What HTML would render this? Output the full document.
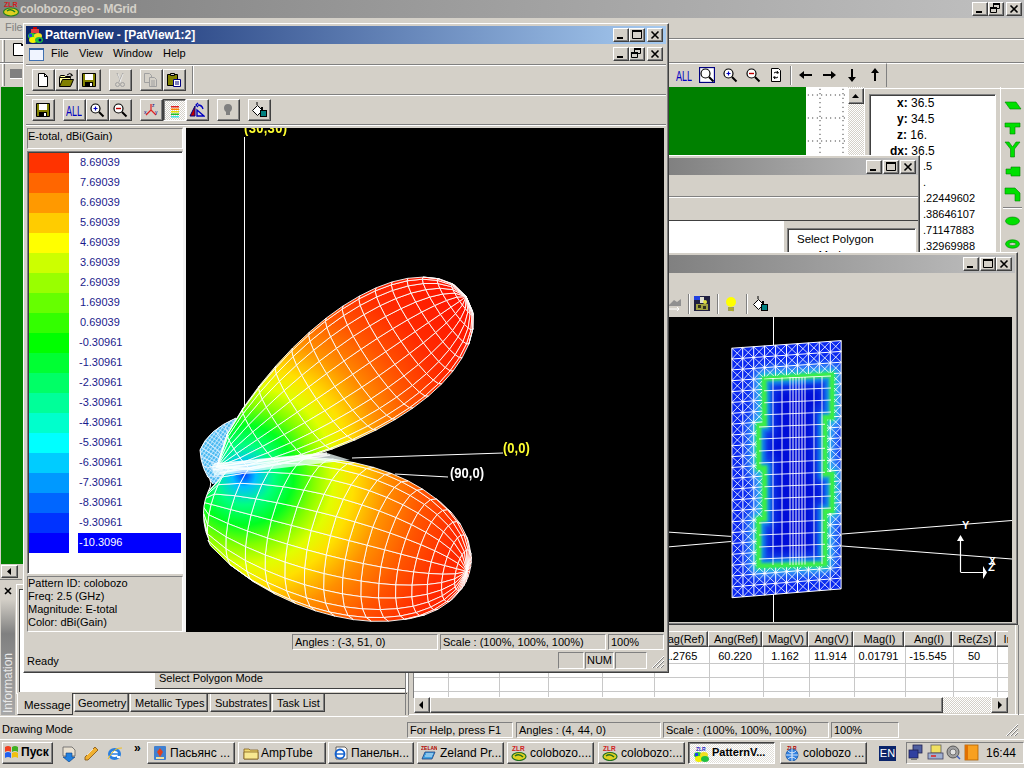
<!DOCTYPE html>
<html><head><meta charset="utf-8">
<style>
*{margin:0;padding:0;box-sizing:border-box}
html,body{width:1024px;height:768px;overflow:hidden;background:#D4D0C8;font-family:"Liberation Sans",sans-serif;font-size:11px;color:#000;position:relative}
.a{position:absolute}
.raised{border-top:1px solid #fff;border-left:1px solid #fff;border-right:1px solid #404040;border-bottom:1px solid #404040;box-shadow:inset -1px -1px 0 #808080;background:#D4D0C8}
.sunk{border-top:1px solid #808080;border-left:1px solid #808080;border-right:1px solid #fff;border-bottom:1px solid #fff}
.sunk2{border-top:1px solid #808080;border-left:1px solid #808080;border-right:1px solid #fff;border-bottom:1px solid #fff;box-shadow:inset 1px 1px 0 #404040}
.stat{position:absolute;border-top:1px solid #808080;border-left:1px solid #808080;border-right:1px solid #fff;border-bottom:1px solid #fff;padding-left:2px;line-height:14px;white-space:nowrap;overflow:hidden;font-size:11px}
.tb{position:absolute;width:16px;height:14px;background:#D4D0C8;border-top:1px solid #fff;border-left:1px solid #fff;border-right:1px solid #404040;border-bottom:1px solid #404040;box-shadow:inset -1px -1px 0 #808080}
.t{position:absolute;white-space:nowrap}
.hl{position:absolute;height:1px}
.vl{position:absolute;width:1px}
.btn{position:absolute;background:#D4D0C8;border-top:1px solid #fff;border-left:1px solid #fff;border-right:1px solid #404040;border-bottom:1px solid #404040;box-shadow:inset -1px -1px 0 #808080}
.tk{position:absolute;top:742px;height:22px;background:#D4D0C8;border-top:1px solid #fff;border-left:1px solid #fff;border-right:1px solid #404040;border-bottom:1px solid #404040;box-shadow:inset -1px -1px 0 #808080;font-size:11px;line-height:19px;padding-left:22px;white-space:nowrap;overflow:hidden}
</style></head><body>

<!-- ===== MAIN WINDOW (background) ===== -->
<div class="a" style="left:0;top:0;width:1024px;height:18px;background:linear-gradient(to right,#808080,#C0C0C0)"></div>
<div class="t" style="left:20px;top:2px;font-weight:bold;font-size:12px;color:#D4D0C8;letter-spacing:-0.3px">colobozo.geo - MGrid</div>
<svg class="a" width="18" height="18" style="left:2px;top:0px"><text x="2" y="7" font-family="Liberation Sans" font-weight="bold" font-size="7" fill="#D02020">ZLR</text><ellipse cx="9" cy="12" rx="7.5" ry="4" fill="#E0D020" stroke="#208020" stroke-width="1.2"/><path d="M5 11q4-3 8 1" stroke="#208020" stroke-width="1.5" fill="none"/></svg>
<div class="tb" style="left:972px;top:2px"><svg width="16" height="14" style="position:absolute;left:-1px;top:-1px"><rect x="4" y="9" width="6" height="2" fill="#000"/></svg></div>
<div class="tb" style="left:988px;top:2px"><svg width="16" height="14" style="position:absolute;left:-1px;top:-1px"><path d="M5.5 1.5h6v5h-6z" fill="none" stroke="#000"/><rect x="5" y="1" width="7" height="2" fill="#000"/><path d="M2.5 5.5h6v5h-6z" fill="#D4D0C8" stroke="#000"/><rect x="2" y="5" width="7" height="2" fill="#000"/></svg></div>
<div class="tb" style="left:1006px;top:2px"><svg width="16" height="14" style="position:absolute;left:-1px;top:-1px"><path d="M4.5 3.5L11.5 10.5M11.5 3.5L4.5 10.5" stroke="#000" stroke-width="1.6"/></svg></div>
<div class="t" style="left:5px;top:21px;font-size:11px;color:#808080">File</div>
<div class="hl" style="left:0;top:38px;width:1024px;background:#808080"></div>
<div class="hl" style="left:0;top:39px;width:1024px;background:#fff"></div>
<div class="hl" style="left:0;top:62px;width:1024px;background:#808080"></div>
<div class="hl" style="left:0;top:63px;width:1024px;background:#fff"></div>


<div class="vl" style="left:2px;top:40px;height:22px;background:#fff"></div><div class="vl" style="left:4px;top:40px;height:22px;background:#808080"></div>
<div class="vl" style="left:2px;top:64px;height:22px;background:#fff"></div><div class="vl" style="left:4px;top:64px;height:22px;background:#808080"></div>
<svg class="a" width="12" height="14" style="left:12px;top:43px"><path d="M1.5 0.5h8l2 2v10h-10z" fill="#fff" stroke="#000"/><path d="M9.5 0.5v2h2" fill="none" stroke="#000"/></svg>
<div class="a" style="left:10px;top:69px;width:12px;height:10px;background:#808080;border-bottom:1px solid #fff"></div>
<!-- main toolbar right -->
<div class="a" style="left:668px;top:63px;width:219px;height:24px;border-left:1px solid #fff;border-top:1px solid #fff;border-right:1px solid #808080"></div>
<div class="vl" style="left:790px;top:66px;height:19px;background:#808080"></div><div class="vl" style="left:791px;top:66px;height:19px;background:#fff"></div>
<svg class="a" width="16" height="16" style="left:676px;top:67px"><text x="0" y="13" font-family="Liberation Sans" font-size="13" fill="#0000C0" textLength="16" lengthAdjust="spacingAndGlyphs" transform="scale(1,1.1)">ALL</text></svg>
<svg class="a" width="16" height="16" style="left:699px;top:67px"><rect x="0.5" y="0.5" width="15" height="15" fill="#fff" stroke="#000080" stroke-width="1.3"/><circle cx="6.5" cy="6.5" r="4.5" fill="#fff" stroke="#000" stroke-width="1.2"/><path d="M10 10l4.5 4.5" stroke="#000" stroke-width="2"/></svg>
<svg class="a" width="16" height="16" style="left:722px;top:67px"><circle cx="6.5" cy="6.5" r="4.5" fill="#fff" stroke="#000" stroke-width="1.2"/><path d="M10 10l4.5 4.5" stroke="#000" stroke-width="2"/><path d="M4.5 6.5h4M6.5 4.5v4" stroke="#0000C0" stroke-width="1.2"/></svg>
<svg class="a" width="16" height="16" style="left:745px;top:67px"><circle cx="6.5" cy="6.5" r="4.5" fill="#fff" stroke="#000" stroke-width="1.2"/><path d="M10 10l4.5 4.5" stroke="#000" stroke-width="2"/><path d="M4 6.5h5" stroke="#C00000" stroke-width="1.4"/></svg>
<svg class="a" width="16" height="16" style="left:768px;top:67px"><path d="M3.5 1.5h7l2 2v11h-9z" fill="#fff" stroke="#000"/><path d="M6 6q2-2 4 0M10 10q-2 2-4 0" stroke="#000" fill="none"/><path d="M9 4l1.5 2h-2M7 12l-1.5-2h2" stroke="#000" fill="none"/></svg>
<svg class="a" width="16" height="16" style="left:798px;top:67px"><path d="M1 8l5-4v3h8v2H6v3z" fill="#000"/></svg>
<svg class="a" width="16" height="16" style="left:821px;top:67px"><path d="M15 8l-5-4v3H2v2h8v3z" fill="#000"/></svg>
<svg class="a" width="16" height="16" style="left:844px;top:67px"><path d="M8 15l-4-5h3V2h2v8h3z" fill="#000"/></svg>
<svg class="a" width="16" height="16" style="left:867px;top:67px"><path d="M8 1l-4 5h3v8h2V6h3z" fill="#000"/></svg>
<!-- green drawing area -->
<div class="a" style="left:1px;top:87px;width:806px;height:477px;background:#008000"></div>
<div class="a" style="left:806px;top:87px;width:42px;height:68px;background:#fff"></div>
<div class="a" style="left:848px;top:87px;width:16px;height:68px;background:#E8E6E2"></div>


<!-- right property panel -->
<div class="a" style="left:806px;top:87px;width:42px;height:68px;background-color:#fff;background-image:radial-gradient(circle,#000 0.6px,transparent 0.7px);background-size:4.5px 23px;background-position:0px -3.5px"></div>
<div class="a" style="left:806px;top:87px;width:42px;height:68px;background-image:radial-gradient(circle,#000 0.6px,transparent 0.7px);background-size:23px 4.5px;background-position:2.5px 0px"></div>
<div class="a" style="left:848px;top:87px;width:16px;height:68px;background:repeating-conic-gradient(#fff 0 25%,#D4D0C8 0 50%) 0 0/2px 2px"></div>
<div class="a raised" style="left:848px;top:88px;width:16px;height:16px"></div>
<svg class="a" width="16" height="16" style="left:848px;top:88px"><path d="M4 10h7l-3.5-4z" fill="#000"/></svg>
<div class="a" style="left:864px;top:88px;width:136px;height:170px;border-top:1px solid #fff;border-left:1px solid #fff"></div>
<div class="a sunk2" style="left:869px;top:94px;width:127px;height:164px;background:#fff"></div>
<div class="t" style="left:897px;top:96px;font-size:12px"><b>x:</b> 36.5</div>
<div class="t" style="left:897px;top:112px;font-size:12px"><b>y:</b> 34.5</div>
<div class="t" style="left:897px;top:128px;font-size:12px"><b>z:</b> 16.</div>
<div class="t" style="left:890px;top:144px;font-size:12px"><b>dx:</b> 36.5</div>
<div class="t" style="left:923px;top:160px;font-size:11px">.5</div>
<div class="t" style="left:923px;top:176px;font-size:11px">.</div>
<div class="t" style="left:923px;top:192px;font-size:11px">.22449602</div>
<div class="t" style="left:923px;top:208px;font-size:11px">.38646107</div>
<div class="t" style="left:923px;top:224px;font-size:11px">.71147883</div>
<div class="t" style="left:923px;top:240px;font-size:11px">.32969988</div>
<!-- right green toolbar -->
<div class="vl" style="left:1000px;top:87px;height:170px;background:#fff"></div>
<div class="hl" style="left:1001px;top:88px;width:23px;background:#fff"></div>
<svg class="a" width="24" height="170" style="left:1000px;top:87px">
<g fill="#00E000" stroke="#008000" stroke-width="0.6">
<path d="M5 15h11l5 7H10z"/>
<path d="M5 36h15v4h-5v7h-5v-7H5z"/>
<path d="M5 55h4l3.5 5 3.5-5h4l-5.5 7v8h-4v-8z"/>
<path d="M6 82h5v-2h9v9h-9v-2H6z"/>
<path d="M5 101h10l5 5v8h-5v-7H5z"/>
<ellipse cx="12.5" cy="134" rx="7" ry="4"/>
<path d="M5.5 157a7 4.2 0 1 0 14 0a7 4.2 0 1 0-14 0zM9 157a3.5 1.5 0 1 0 7 0a3.5 1.5 0 1 0-7 0z" fill-rule="evenodd"/>
</g>
<path d="M3 120.5h19" stroke="#808080"/><path d="M3 121.5h19" stroke="#fff"/>
</svg>
<!-- window 2 (inactive) -->
<div class="a raised" style="left:666px;top:155px;width:254px;height:100px"></div>
<div class="a" style="left:668px;top:158px;width:250px;height:17px;background:linear-gradient(to right,#808080,#C0C0C0)"></div>
<div class="tb" style="left:866px;top:160px"><svg width="16" height="14" style="position:absolute;left:-1px;top:-1px"><rect x="4" y="9" width="6" height="2" fill="#000"/></svg></div>
<div class="tb" style="left:883px;top:160px"><svg width="16" height="14" style="position:absolute;left:-1px;top:-1px"><path d="M3.5 2.5h9v8h-9z" fill="none" stroke="#000"/><rect x="3" y="2" width="10" height="2" fill="#000"/></svg></div>
<div class="tb" style="left:900px;top:160px"><svg width="16" height="14" style="position:absolute;left:-1px;top:-1px"><path d="M4.5 3.5L11.5 10.5M11.5 3.5L4.5 10.5" stroke="#000" stroke-width="1.6"/></svg></div>
<div class="hl" style="left:668px;top:196px;width:250px;background:#808080"></div>
<div class="hl" style="left:668px;top:197px;width:250px;background:#fff"></div>
<div class="hl" style="left:668px;top:220px;width:250px;background:#404040"></div>
<div class="a" style="left:668px;top:221px;width:116px;height:34px;background:#fff"></div>
<div class="a sunk2" style="left:787px;top:228px;width:129px;height:30px;background:#fff"></div>
<div class="t" style="left:797px;top:231px;font-size:11.5px;line-height:16px;text-align:center;width:72px">Select Polygon<br>Mode</div>

<!-- window 3 (inactive, 3D geometry) -->
<div class="a raised" style="left:664px;top:252px;width:354px;height:373px"></div>
<div class="a" style="left:667px;top:255px;width:348px;height:18px;background:linear-gradient(to right,#808080,#C0C0C0)"></div>
<div class="tb" style="left:963px;top:257px"><svg width="16" height="14" style="position:absolute;left:-1px;top:-1px"><rect x="4" y="9" width="6" height="2" fill="#000"/></svg></div>
<div class="tb" style="left:980px;top:257px"><svg width="16" height="14" style="position:absolute;left:-1px;top:-1px"><path d="M3.5 2.5h9v8h-9z" fill="none" stroke="#000"/><rect x="3" y="2" width="10" height="2" fill="#000"/></svg></div>
<div class="tb" style="left:996px;top:257px"><svg width="16" height="14" style="position:absolute;left:-1px;top:-1px"><path d="M4.5 3.5L11.5 10.5M11.5 3.5L4.5 10.5" stroke="#000" stroke-width="1.6"/></svg></div>
<div class="vl" style="left:667px;top:273px;height:350px;background:#404040"></div>
<svg class="a" width="16" height="16" style="left:668px;top:296px"><path d="M1 9l5-5 3 2 4-3v7H1z" fill="#909090"/><path d="M1 13h10M9 11l2 2-2 2" stroke="#fff" fill="none"/></svg>
<div class="vl" style="left:688px;top:294px;height:20px;background:#808080"></div><div class="vl" style="left:689px;top:294px;height:20px;background:#fff"></div>
<svg class="a" width="16" height="16" style="left:694px;top:296px"><rect x="0" y="0" width="16" height="15" fill="#202040"/><rect x="0" y="0" width="6" height="4" fill="#2040E0"/><path d="M6 1h4v6H6z" fill="#E0E0D0"/><path d="M2 8h12v6H2z" fill="#A0A040"/><circle cx="11" cy="6" r="2" fill="#E0E040"/><path d="M4 9h3v3H4zM9 10h3v3H9z" fill="#303020"/></svg>
<div class="vl" style="left:717px;top:294px;height:20px;background:#808080"></div><div class="vl" style="left:718px;top:294px;height:20px;background:#fff"></div>
<svg class="a" width="16" height="16" style="left:723px;top:296px"><circle cx="8" cy="6" r="5" fill="#FFFF00"/><path d="M5 12h6M5 14h6" stroke="#606000" stroke-width="1.2"/><path d="M5.5 11.5l5 1.5M5.5 13.5l5 1.5" stroke="#C0C000" stroke-width="0.8"/></svg>
<div class="vl" style="left:746px;top:294px;height:20px;background:#808080"></div><div class="vl" style="left:747px;top:294px;height:20px;background:#fff"></div>
<svg class="a" width="16" height="16" style="left:752px;top:296px"><path d="M1.5 8.5l5-5 5 5-5 5z" fill="#fff" stroke="#000"/><path d="M6 3V0" stroke="#000"/><rect x="9.5" y="8.5" width="6" height="6" fill="#008080" stroke="#000"/><path d="M11 5v3" stroke="#000" stroke-width="2"/></svg>
<div class="a" style="left:668px;top:317px;width:344px;height:305px;background:#000;overflow:hidden"><svg width="344" height="305" style="position:absolute;left:0;top:0"><defs>
<filter id="bl" x="-50%" y="-50%" width="200%" height="200%"><feGaussianBlur stdDeviation="5"/></filter>
<filter id="bl2" x="-50%" y="-50%" width="200%" height="200%"><feGaussianBlur stdDeviation="2"/></filter>
<filter id="bl3" x="-50%" y="-50%" width="200%" height="200%"><feGaussianBlur stdDeviation="0.8"/></filter>
<clipPath id="ic"><polygon points="96.0,61.6 164.0,57.7 164.0,100.6 157.0,100.6 157.0,157.0 164.0,157.0 164.0,194.0 157.0,194.0 157.0,247.0 90.6,249.0 90.6,202.0 96.4,202.0 96.4,151.0 90.6,151.0 90.6,108.0 96.4,108.0"/></clipPath><clipPath id="oc"><polygon points="63.8,31.2 173.2,23.6 173.1,271.9 64.1,280.7"/></clipPath>
<mask id="om"><rect width="345" height="305" fill="#fff"/><polygon points="96.0,61.6 164.0,57.7 164.0,100.6 157.0,100.6 157.0,157.0 164.0,157.0 164.0,194.0 157.0,194.0 157.0,247.0 90.6,249.0 90.6,202.0 96.4,202.0 96.4,151.0 90.6,151.0 90.6,108.0 96.4,108.0" fill="#000" stroke="#000" stroke-width="4"/></mask></defs><line x1="105.5" y1="0" x2="105.5" y2="305" stroke="#fff"/><polyline points="-1.0,215.0 63.0,219.4" stroke="#fff" fill="none"/><polyline points="-1.0,230.0 63.0,224.5" stroke="#fff" fill="none"/><polyline points="174.0,217.0 344.0,203.5" stroke="#fff" fill="none"/><polyline points="174.0,229.0 344.0,242.0" stroke="#fff" fill="none"/><polygon points="63.8,31.2 173.2,23.6 173.1,271.9 64.1,280.7" fill="#0A28F0"/><polygon points="96.0,61.6 164.0,57.7 164.0,100.6 157.0,100.6 157.0,157.0 164.0,157.0 164.0,194.0 157.0,194.0 157.0,247.0 90.6,249.0 90.6,202.0 96.4,202.0 96.4,151.0 90.6,151.0 90.6,108.0 96.4,108.0" fill="none" stroke="#50D0FF" stroke-width="22" stroke-linejoin="round" opacity="0.75" filter="url(#bl)" clip-path="url(#oc)"/><polygon points="96.0,61.6 164.0,57.7 164.0,100.6 157.0,100.6 157.0,157.0 164.0,157.0 164.0,194.0 157.0,194.0 157.0,247.0 90.6,249.0 90.6,202.0 96.4,202.0 96.4,151.0 90.6,151.0 90.6,108.0 96.4,108.0" fill="#0010D8" stroke="#10D8B0" stroke-width="8" filter="url(#bl2)"/><polygon points="96.0,61.6 164.0,57.7 164.0,100.6 157.0,100.6 157.0,157.0 164.0,157.0 164.0,194.0 157.0,194.0 157.0,247.0 90.6,249.0 90.6,202.0 96.4,202.0 96.4,151.0 90.6,151.0 90.6,108.0 96.4,108.0" fill="none" stroke="#2080FF" stroke-width="22" opacity="0.5" filter="url(#bl)" clip-path="url(#ic)"/><polygon points="96.0,61.6 164.0,57.7 164.0,100.6 157.0,100.6 157.0,157.0 164.0,157.0 164.0,194.0 157.0,194.0 157.0,247.0 90.6,249.0 90.6,202.0 96.4,202.0 96.4,151.0 90.6,151.0 90.6,108.0 96.4,108.0" fill="none" stroke="#40F040" stroke-width="5" opacity="0.95" filter="url(#bl3)"/><path d="M63.8,31.2L64.1,280.7M74.7,30.4L75.0,279.8M85.7,29.7L85.9,278.9M96.6,28.9L96.8,278.1M107.6,28.2L107.7,277.2M118.5,27.4L118.6,276.3M129.4,26.6L129.5,275.4M140.4,25.9L140.4,274.5M151.3,25.1L151.3,273.7M162.3,24.4L162.2,272.8M173.2,23.6L173.1,271.9M63.8,31.2L173.2,23.6M63.8,42.0L173.2,34.4M63.8,52.9L173.2,45.2M63.8,63.7L173.2,56.0M63.9,74.6L173.2,66.8M63.9,85.4L173.2,77.6M63.9,96.3L173.2,88.4M63.9,107.1L173.2,99.2M63.9,118.0L173.2,110.0M63.9,128.8L173.2,120.8M63.9,139.7L173.2,131.6M63.9,150.5L173.2,142.4M64.0,161.4L173.1,153.1M64.0,172.2L173.1,163.9M64.0,183.1L173.1,174.7M64.0,193.9L173.1,185.5M64.0,204.8L173.1,196.3M64.0,215.6L173.1,207.1M64.0,226.5L173.1,217.9M64.0,237.3L173.1,228.7M64.1,248.2L173.1,239.5M64.1,259.0L173.1,250.3M64.1,269.9L173.1,261.1M64.1,280.7L173.1,271.9" stroke="#fff" stroke-width="1" fill="none" mask="url(#om)"/><path d="M63.8,31.2L74.8,41.3M74.7,30.4L63.8,42.0M63.8,42.0L74.8,52.1M74.8,41.3L63.8,52.9M63.8,52.9L74.8,63.0M74.8,52.1L63.8,63.7M63.8,63.7L74.8,73.8M74.8,63.0L63.9,74.6M63.9,74.6L74.8,84.7M74.8,73.8L63.9,85.4M63.9,85.4L74.8,95.5M74.8,84.7L63.9,96.3M63.9,96.3L74.8,106.3M74.8,95.5L63.9,107.1M63.9,107.1L74.8,117.2M74.8,106.3L63.9,118.0M63.9,118.0L74.8,128.0M74.8,117.2L63.9,128.8M63.9,128.8L74.9,138.9M74.8,128.0L63.9,139.7M63.9,139.7L74.9,149.7M74.9,138.9L63.9,150.5M63.9,150.5L74.9,160.6M74.9,149.7L64.0,161.4M64.0,161.4L74.9,171.4M74.9,160.6L64.0,172.2M64.0,172.2L74.9,182.2M74.9,171.4L64.0,183.1M64.0,183.1L74.9,193.1M74.9,182.2L64.0,193.9M64.0,193.9L74.9,203.9M74.9,193.1L64.0,204.8M64.0,204.8L74.9,214.8M74.9,203.9L64.0,215.6M64.0,215.6L74.9,225.6M74.9,214.8L64.0,226.5M64.0,226.5L75.0,236.4M74.9,225.6L64.0,237.3M64.0,237.3L75.0,247.3M75.0,236.4L64.1,248.2M64.1,248.2L75.0,258.1M75.0,247.3L64.1,259.0M64.1,259.0L75.0,269.0M75.0,258.1L64.1,269.9M64.1,269.9L75.0,279.8M75.0,269.0L64.1,280.7M74.7,30.4L85.7,40.5M85.7,29.7L74.8,41.3M74.8,41.3L85.7,51.4M85.7,40.5L74.8,52.1M74.8,52.1L85.7,62.2M85.7,51.4L74.8,63.0M74.8,63.0L85.7,73.0M85.7,62.2L74.8,73.8M74.8,73.8L85.7,83.9M85.7,73.0L74.8,84.7M74.8,84.7L85.7,94.7M85.7,83.9L74.8,95.5M74.8,95.5L85.7,105.5M85.7,94.7L74.8,106.3M74.8,106.3L85.8,116.4M85.7,105.5L74.8,117.2M74.8,117.2L85.8,127.2M85.8,116.4L74.8,128.0M74.8,128.0L85.8,138.1M85.8,127.2L74.9,138.9M74.9,138.9L85.8,148.9M85.8,138.1L74.9,149.7M74.9,149.7L85.8,159.7M85.8,148.9L74.9,160.6M74.9,160.6L85.8,170.6M85.8,159.7L74.9,171.4M74.9,171.4L85.8,181.4M85.8,170.6L74.9,182.2M74.9,182.2L85.8,192.2M85.8,181.4L74.9,193.1M74.9,193.1L85.8,203.1M85.8,192.2L74.9,203.9M74.9,203.9L85.8,213.9M85.8,203.1L74.9,214.8M74.9,214.8L85.9,224.8M85.8,213.9L74.9,225.6M74.9,225.6L85.9,235.6M85.9,224.8L75.0,236.4M75.0,236.4L85.9,246.4M85.9,235.6L75.0,247.3M75.0,247.3L85.9,257.3M85.9,246.4L75.0,258.1M75.0,258.1L85.9,268.1M85.9,257.3L75.0,269.0M75.0,269.0L85.9,278.9M85.9,268.1L75.0,279.8M85.7,29.7L96.6,39.8M96.6,28.9L85.7,40.5M85.7,40.5L96.6,50.6M96.6,39.8L85.7,51.4M85.7,51.4L96.6,61.4M96.6,50.6L85.7,62.2M85.7,62.2L96.7,72.2M96.6,61.4L85.7,73.0M85.7,73.0L96.7,83.1M96.7,72.2L85.7,83.9M85.7,83.9L96.7,93.9M96.7,83.1L85.7,94.7M85.7,94.7L96.7,104.7M96.7,93.9L85.7,105.5M85.7,105.5L96.7,115.6M96.7,104.7L85.8,116.4M85.8,116.4L96.7,126.4M96.7,115.6L85.8,127.2M85.8,127.2L96.7,137.2M96.7,126.4L85.8,138.1M85.8,138.1L96.7,148.1M96.7,137.2L85.8,148.9M85.8,148.9L96.7,158.9M96.7,148.1L85.8,159.7M85.8,159.7L96.7,169.7M96.7,158.9L85.8,170.6M85.8,170.6L96.7,180.6M96.7,169.7L85.8,181.4M85.8,181.4L96.7,191.4M96.7,180.6L85.8,192.2M85.8,192.2L96.7,202.2M96.7,191.4L85.8,203.1M85.8,203.1L96.8,213.1M96.7,202.2L85.8,213.9M85.8,213.9L96.8,223.9M96.8,213.1L85.9,224.8M85.9,224.8L96.8,234.7M96.8,223.9L85.9,235.6M85.9,235.6L96.8,245.6M96.8,234.7L85.9,246.4M85.9,246.4L96.8,256.4M96.8,245.6L85.9,257.3M85.9,257.3L96.8,267.2M96.8,256.4L85.9,268.1M85.9,268.1L96.8,278.1M96.8,267.2L85.9,278.9M96.6,28.9L107.6,39.0M107.6,28.2L96.6,39.8M96.6,39.8L107.6,49.8M107.6,39.0L96.6,50.6M96.6,50.6L107.6,60.6M107.6,49.8L96.6,61.4M96.6,61.4L107.6,71.5M107.6,60.6L96.7,72.2M96.7,72.2L107.6,82.3M107.6,71.5L96.7,83.1M96.7,83.1L107.6,93.1M107.6,82.3L96.7,93.9M96.7,93.9L107.6,103.9M107.6,93.1L96.7,104.7M96.7,104.7L107.6,114.8M107.6,103.9L96.7,115.6M96.7,115.6L107.6,125.6M107.6,114.8L96.7,126.4M96.7,126.4L107.6,136.4M107.6,125.6L96.7,137.2M96.7,137.2L107.6,147.3M107.6,136.4L96.7,148.1M96.7,148.1L107.6,158.1M107.6,147.3L96.7,158.9M96.7,158.9L107.6,168.9M107.6,158.1L96.7,169.7M96.7,169.7L107.6,179.7M107.6,168.9L96.7,180.6M96.7,180.6L107.7,190.6M107.6,179.7L96.7,191.4M96.7,191.4L107.7,201.4M107.7,190.6L96.7,202.2M96.7,202.2L107.7,212.2M107.7,201.4L96.8,213.1M96.8,213.1L107.7,223.0M107.7,212.2L96.8,223.9M96.8,223.9L107.7,233.9M107.7,223.0L96.8,234.7M96.8,234.7L107.7,244.7M107.7,233.9L96.8,245.6M96.8,245.6L107.7,255.5M107.7,244.7L96.8,256.4M96.8,256.4L107.7,266.4M107.7,255.5L96.8,267.2M96.8,267.2L107.7,277.2M107.7,266.4L96.8,278.1M107.6,28.2L118.5,38.2M118.5,27.4L107.6,39.0M107.6,39.0L118.5,49.0M118.5,38.2L107.6,49.8M107.6,49.8L118.5,59.9M118.5,49.0L107.6,60.6M107.6,60.6L118.5,70.7M118.5,59.9L107.6,71.5M107.6,71.5L118.5,81.5M118.5,70.7L107.6,82.3M107.6,82.3L118.5,92.3M118.5,81.5L107.6,93.1M107.6,93.1L118.5,103.2M118.5,92.3L107.6,103.9M107.6,103.9L118.5,114.0M118.5,103.2L107.6,114.8M107.6,114.8L118.5,124.8M118.5,114.0L107.6,125.6M107.6,125.6L118.5,135.6M118.5,124.8L107.6,136.4M107.6,136.4L118.5,146.4M118.5,135.6L107.6,147.3M107.6,147.3L118.6,157.3M118.5,146.4L107.6,158.1M107.6,158.1L118.6,168.1M118.6,157.3L107.6,168.9M107.6,168.9L118.6,178.9M118.6,168.1L107.6,179.7M107.6,179.7L118.6,189.7M118.6,178.9L107.7,190.6M107.7,190.6L118.6,200.5M118.6,189.7L107.7,201.4M107.7,201.4L118.6,211.4M118.6,200.5L107.7,212.2M107.7,212.2L118.6,222.2M118.6,211.4L107.7,223.0M107.7,223.0L118.6,233.0M118.6,222.2L107.7,233.9M107.7,233.9L118.6,243.8M118.6,233.0L107.7,244.7M107.7,244.7L118.6,254.7M118.6,243.8L107.7,255.5M107.7,255.5L118.6,265.5M118.6,254.7L107.7,266.4M107.7,266.4L118.6,276.3M118.6,265.5L107.7,277.2M118.5,27.4L129.4,37.5M129.4,26.6L118.5,38.2M118.5,38.2L129.4,48.3M129.4,37.5L118.5,49.0M118.5,49.0L129.4,59.1M129.4,48.3L118.5,59.9M118.5,59.9L129.5,69.9M129.4,59.1L118.5,70.7M118.5,70.7L129.5,80.7M129.5,69.9L118.5,81.5M118.5,81.5L129.5,91.5M129.5,80.7L118.5,92.3M118.5,92.3L129.5,102.4M129.5,91.5L118.5,103.2M118.5,103.2L129.5,113.2M129.5,102.4L118.5,114.0M118.5,114.0L129.5,124.0M129.5,113.2L118.5,124.8M118.5,124.8L129.5,134.8M129.5,124.0L118.5,135.6M118.5,135.6L129.5,145.6M129.5,134.8L118.5,146.4M118.5,146.4L129.5,156.4M129.5,145.6L118.6,157.3M118.6,157.3L129.5,167.3M129.5,156.4L118.6,168.1M118.6,168.1L129.5,178.1M129.5,167.3L118.6,178.9M118.6,178.9L129.5,188.9M129.5,178.1L118.6,189.7M118.6,189.7L129.5,199.7M129.5,188.9L118.6,200.5M118.6,200.5L129.5,210.5M129.5,199.7L118.6,211.4M118.6,211.4L129.5,221.3M129.5,210.5L118.6,222.2M118.6,222.2L129.5,232.2M129.5,221.3L118.6,233.0M118.6,233.0L129.5,243.0M129.5,232.2L118.6,243.8M118.6,243.8L129.5,253.8M129.5,243.0L118.6,254.7M118.6,254.7L129.5,264.6M129.5,253.8L118.6,265.5M118.6,265.5L129.5,275.4M129.5,264.6L118.6,276.3M129.4,26.6L140.4,36.7M140.4,25.9L129.4,37.5M129.4,37.5L140.4,47.5M140.4,36.7L129.4,48.3M129.4,48.3L140.4,58.3M140.4,47.5L129.4,59.1M129.4,59.1L140.4,69.1M140.4,58.3L129.5,69.9M129.5,69.9L140.4,79.9M140.4,69.1L129.5,80.7M129.5,80.7L140.4,90.7M140.4,79.9L129.5,91.5M129.5,91.5L140.4,101.6M140.4,90.7L129.5,102.4M129.5,102.4L140.4,112.4M140.4,101.6L129.5,113.2M129.5,113.2L140.4,123.2M140.4,112.4L129.5,124.0M129.5,124.0L140.4,134.0M140.4,123.2L129.5,134.8M129.5,134.8L140.4,144.8M140.4,134.0L129.5,145.6M129.5,145.6L140.4,155.6M140.4,144.8L129.5,156.4M129.5,156.4L140.4,166.4M140.4,155.6L129.5,167.3M129.5,167.3L140.4,177.2M140.4,166.4L129.5,178.1M129.5,178.1L140.4,188.0M140.4,177.2L129.5,188.9M129.5,188.9L140.4,198.9M140.4,188.0L129.5,199.7M129.5,199.7L140.4,209.7M140.4,198.9L129.5,210.5M129.5,210.5L140.4,220.5M140.4,209.7L129.5,221.3M129.5,221.3L140.4,231.3M140.4,220.5L129.5,232.2M129.5,232.2L140.4,242.1M140.4,231.3L129.5,243.0M129.5,243.0L140.4,252.9M140.4,242.1L129.5,253.8M129.5,253.8L140.4,263.7M140.4,252.9L129.5,264.6M129.5,264.6L140.4,274.5M140.4,263.7L129.5,275.4M140.4,25.9L151.3,35.9M151.3,25.1L140.4,36.7M140.4,36.7L151.3,46.7M151.3,35.9L140.4,47.5M140.4,47.5L151.3,57.5M151.3,46.7L140.4,58.3M140.4,58.3L151.3,68.3M151.3,57.5L140.4,69.1M140.4,69.1L151.3,79.2M151.3,68.3L140.4,79.9M140.4,79.9L151.3,90.0M151.3,79.2L140.4,90.7M140.4,90.7L151.3,100.8M151.3,90.0L140.4,101.6M140.4,101.6L151.3,111.6M151.3,100.8L140.4,112.4M140.4,112.4L151.3,122.4M151.3,111.6L140.4,123.2M140.4,123.2L151.3,133.2M151.3,122.4L140.4,134.0M140.4,134.0L151.3,144.0M151.3,133.2L140.4,144.8M140.4,144.8L151.3,154.8M151.3,144.0L140.4,155.6M140.4,155.6L151.3,165.6M151.3,154.8L140.4,166.4M140.4,166.4L151.3,176.4M151.3,165.6L140.4,177.2M140.4,177.2L151.3,187.2M151.3,176.4L140.4,188.0M140.4,188.0L151.3,198.0M151.3,187.2L140.4,198.9M140.4,198.9L151.3,208.8M151.3,198.0L140.4,209.7M140.4,209.7L151.3,219.6M151.3,208.8L140.4,220.5M140.4,220.5L151.3,230.4M151.3,219.6L140.4,231.3M140.4,231.3L151.3,241.2M151.3,230.4L140.4,242.1M140.4,242.1L151.3,252.0M151.3,241.2L140.4,252.9M140.4,252.9L151.3,262.9M151.3,252.0L140.4,263.7M140.4,263.7L151.3,273.7M151.3,262.9L140.4,274.5M151.3,25.1L162.3,35.2M162.3,24.4L151.3,35.9M151.3,35.9L162.3,46.0M162.3,35.2L151.3,46.7M151.3,46.7L162.3,56.8M162.3,46.0L151.3,57.5M151.3,57.5L162.2,67.6M162.3,56.8L151.3,68.3M151.3,68.3L162.2,78.4M162.2,67.6L151.3,79.2M151.3,79.2L162.2,89.2M162.2,78.4L151.3,90.0M151.3,90.0L162.2,100.0M162.2,89.2L151.3,100.8M151.3,100.8L162.2,110.8M162.2,100.0L151.3,111.6M151.3,111.6L162.2,121.6M162.2,110.8L151.3,122.4M151.3,122.4L162.2,132.4M162.2,121.6L151.3,133.2M151.3,133.2L162.2,143.2M162.2,132.4L151.3,144.0M151.3,144.0L162.2,154.0M162.2,143.2L151.3,154.8M151.3,154.8L162.2,164.8M162.2,154.0L151.3,165.6M151.3,165.6L162.2,175.6M162.2,164.8L151.3,176.4M151.3,176.4L162.2,186.4M162.2,175.6L151.3,187.2M151.3,187.2L162.2,197.2M162.2,186.4L151.3,198.0M151.3,198.0L162.2,208.0M162.2,197.2L151.3,208.8M151.3,208.8L162.2,218.8M162.2,208.0L151.3,219.6M151.3,219.6L162.2,229.6M162.2,218.8L151.3,230.4M151.3,230.4L162.2,240.4M162.2,229.6L151.3,241.2M151.3,241.2L162.2,251.2M162.2,240.4L151.3,252.0M151.3,252.0L162.2,262.0M162.2,251.2L151.3,262.9M151.3,262.9L162.2,272.8M162.2,262.0L151.3,273.7M162.3,24.4L173.2,34.4M173.2,23.6L162.3,35.2M162.3,35.2L173.2,45.2M173.2,34.4L162.3,46.0M162.3,46.0L173.2,56.0M173.2,45.2L162.3,56.8M162.3,56.8L173.2,66.8M173.2,56.0L162.2,67.6M162.2,67.6L173.2,77.6M173.2,66.8L162.2,78.4M162.2,78.4L173.2,88.4M173.2,77.6L162.2,89.2M162.2,89.2L173.2,99.2M173.2,88.4L162.2,100.0M162.2,100.0L173.2,110.0M173.2,99.2L162.2,110.8M162.2,110.8L173.2,120.8M173.2,110.0L162.2,121.6M162.2,121.6L173.2,131.6M173.2,120.8L162.2,132.4M162.2,132.4L173.2,142.4M173.2,131.6L162.2,143.2M162.2,143.2L173.1,153.1M173.2,142.4L162.2,154.0M162.2,154.0L173.1,163.9M173.1,153.1L162.2,164.8M162.2,164.8L173.1,174.7M173.1,163.9L162.2,175.6M162.2,175.6L173.1,185.5M173.1,174.7L162.2,186.4M162.2,186.4L173.1,196.3M173.1,185.5L162.2,197.2M162.2,197.2L173.1,207.1M173.1,196.3L162.2,208.0M162.2,208.0L173.1,217.9M173.1,207.1L162.2,218.8M162.2,218.8L173.1,228.7M173.1,217.9L162.2,229.6M162.2,229.6L173.1,239.5M173.1,228.7L162.2,240.4M162.2,240.4L173.1,250.3M173.1,239.5L162.2,251.2M162.2,251.2L173.1,261.1M173.1,250.3L162.2,262.0M162.2,262.0L173.1,271.9M173.1,261.1L162.2,272.8" stroke="#fff" stroke-width="0.8" fill="none" mask="url(#om)"/><path d="M105.0,60.0L105.0,248.0M114.0,60.0L114.0,248.0M122.0,60.0L122.0,248.0M125.0,60.0L125.0,248.0M128.0,60.0L128.0,248.0M131.0,60.0L131.0,248.0M134.0,60.0L134.0,248.0M137.0,60.0L137.0,248.0M146.0,60.0L146.0,248.0M154.0,60.0L154.0,248.0M91.0,62.0L163.0,59.0M91.0,74.0L163.0,71.0M91.0,86.0L163.0,83.0M91.0,98.0L163.0,95.0M91.0,110.0L163.0,107.0M91.0,122.0L163.0,119.0M91.0,134.0L163.0,131.0M91.0,146.0L163.0,143.0M91.0,158.0L163.0,155.0M91.0,170.0L163.0,167.0M91.0,182.0L163.0,179.0M91.0,194.0L163.0,191.0M91.0,206.0L163.0,203.0M91.0,218.0L163.0,215.0M91.0,230.0L163.0,227.0M91.0,242.0L163.0,239.0" stroke="#fff" stroke-width="0.9" fill="none" clip-path="url(#ic)"/><path d="M292.5,255.0L292.5,222.0M292.5,255.5L316.0,255.5" stroke="#fff" stroke-width="1.2" fill="none"/><polygon points="289.0,224.0 292.5,218.0 296.0,224.0" fill="#fff"/><polygon points="315.0,249.0 319.0,255.5 315.0,262.0" fill="#fff"/></svg>
<div class="t" style="left:294px;top:202px;font-size:11px;font-weight:bold;color:#fff">Y</div>
<div class="t" style="left:320px;top:244px;font-size:11px;font-weight:bold;color:#fff">Z</div>
<div class="t" style="left:321px;top:239px;font-size:10px;font-weight:bold;color:#fff">X</div>
</div>

<!-- table -->
<div class="a" style="left:413px;top:627px;width:595px;height:71px;background:#fff;border-left:1px solid #808080;overflow:hidden">
<div class="a" style="left:1px;top:4px;width:32px;height:16px;background:#D4D0C8;border-top:1px solid #fff;border-left:1px solid #fff;border-right:1px solid #404040;border-bottom:1px solid #404040;box-shadow:inset -1px -1px 0 #808080;text-align:center;line-height:15px;font-size:11px;white-space:nowrap;overflow:visible"><span style="display:inline-block;width:32px"></span></div>
<div class="a" style="left:1px;top:21px;width:32px;height:15px;text-align:center;line-height:17px;font-size:11px;white-space:nowrap"></div>
<div class="vl" style="left:34px;top:20px;height:51px;background:#C8C8C8"></div>
<div class="a" style="left:33px;top:4px;width:51px;height:16px;background:#D4D0C8;border-top:1px solid #fff;border-left:1px solid #fff;border-right:1px solid #404040;border-bottom:1px solid #404040;box-shadow:inset -1px -1px 0 #808080;text-align:center;line-height:15px;font-size:11px;white-space:nowrap;overflow:visible"><span style="display:inline-block;width:51px"></span></div>
<div class="a" style="left:33px;top:21px;width:51px;height:15px;text-align:center;line-height:17px;font-size:11px;white-space:nowrap"></div>
<div class="vl" style="left:85px;top:20px;height:51px;background:#C8C8C8"></div>
<div class="a" style="left:84px;top:4px;width:49px;height:16px;background:#D4D0C8;border-top:1px solid #fff;border-left:1px solid #fff;border-right:1px solid #404040;border-bottom:1px solid #404040;box-shadow:inset -1px -1px 0 #808080;text-align:center;line-height:15px;font-size:11px;white-space:nowrap;overflow:visible"><span style="display:inline-block;width:49px"></span></div>
<div class="a" style="left:84px;top:21px;width:49px;height:15px;text-align:center;line-height:17px;font-size:11px;white-space:nowrap"></div>
<div class="vl" style="left:134px;top:20px;height:51px;background:#C8C8C8"></div>
<div class="a" style="left:133px;top:4px;width:54px;height:16px;background:#D4D0C8;border-top:1px solid #fff;border-left:1px solid #fff;border-right:1px solid #404040;border-bottom:1px solid #404040;box-shadow:inset -1px -1px 0 #808080;text-align:center;line-height:15px;font-size:11px;white-space:nowrap;overflow:visible"><span style="display:inline-block;width:54px"></span></div>
<div class="a" style="left:133px;top:21px;width:54px;height:15px;text-align:center;line-height:17px;font-size:11px;white-space:nowrap"></div>
<div class="vl" style="left:188px;top:20px;height:51px;background:#C8C8C8"></div>
<div class="a" style="left:187px;top:4px;width:52px;height:16px;background:#D4D0C8;border-top:1px solid #fff;border-left:1px solid #fff;border-right:1px solid #404040;border-bottom:1px solid #404040;box-shadow:inset -1px -1px 0 #808080;text-align:center;line-height:15px;font-size:11px;white-space:nowrap;overflow:visible"><span style="display:inline-block;width:52px"></span></div>
<div class="a" style="left:187px;top:21px;width:52px;height:15px;text-align:center;line-height:17px;font-size:11px;white-space:nowrap"></div>
<div class="vl" style="left:240px;top:20px;height:51px;background:#C8C8C8"></div>
<div class="a" style="left:239px;top:4px;width:55px;height:16px;background:#D4D0C8;border-top:1px solid #fff;border-left:1px solid #fff;border-right:1px solid #404040;border-bottom:1px solid #404040;box-shadow:inset -1px -1px 0 #808080;text-align:center;line-height:15px;font-size:11px;white-space:nowrap;overflow:visible"><span style="display:inline-block;width:55px">Mag(Ref)</span></div>
<div class="a" style="left:239px;top:21px;width:55px;height:15px;text-align:center;line-height:17px;font-size:11px;white-space:nowrap">1.2765</div>
<div class="vl" style="left:295px;top:20px;height:51px;background:#C8C8C8"></div>
<div class="a" style="left:294px;top:4px;width:54px;height:16px;background:#D4D0C8;border-top:1px solid #fff;border-left:1px solid #fff;border-right:1px solid #404040;border-bottom:1px solid #404040;box-shadow:inset -1px -1px 0 #808080;text-align:center;line-height:15px;font-size:11px;white-space:nowrap;overflow:visible"><span style="display:inline-block;width:54px">Ang(Ref)</span></div>
<div class="a" style="left:294px;top:21px;width:54px;height:15px;text-align:center;line-height:17px;font-size:11px;white-space:nowrap">60.220</div>
<div class="vl" style="left:349px;top:20px;height:51px;background:#C8C8C8"></div>
<div class="a" style="left:348px;top:4px;width:46px;height:16px;background:#D4D0C8;border-top:1px solid #fff;border-left:1px solid #fff;border-right:1px solid #404040;border-bottom:1px solid #404040;box-shadow:inset -1px -1px 0 #808080;text-align:center;line-height:15px;font-size:11px;white-space:nowrap;overflow:visible"><span style="display:inline-block;width:46px">Mag(V)</span></div>
<div class="a" style="left:348px;top:21px;width:46px;height:15px;text-align:center;line-height:17px;font-size:11px;white-space:nowrap">1.162</div>
<div class="vl" style="left:395px;top:20px;height:51px;background:#C8C8C8"></div>
<div class="a" style="left:394px;top:4px;width:45px;height:16px;background:#D4D0C8;border-top:1px solid #fff;border-left:1px solid #fff;border-right:1px solid #404040;border-bottom:1px solid #404040;box-shadow:inset -1px -1px 0 #808080;text-align:center;line-height:15px;font-size:11px;white-space:nowrap;overflow:visible"><span style="display:inline-block;width:45px">Ang(V)</span></div>
<div class="a" style="left:394px;top:21px;width:45px;height:15px;text-align:center;line-height:17px;font-size:11px;white-space:nowrap">11.914</div>
<div class="vl" style="left:440px;top:20px;height:51px;background:#C8C8C8"></div>
<div class="a" style="left:439px;top:4px;width:51px;height:16px;background:#D4D0C8;border-top:1px solid #fff;border-left:1px solid #fff;border-right:1px solid #404040;border-bottom:1px solid #404040;box-shadow:inset -1px -1px 0 #808080;text-align:center;line-height:15px;font-size:11px;white-space:nowrap;overflow:visible"><span style="display:inline-block;width:51px">Mag(I)</span></div>
<div class="a" style="left:439px;top:21px;width:51px;height:15px;text-align:center;line-height:17px;font-size:11px;white-space:nowrap">0.01791</div>
<div class="vl" style="left:491px;top:20px;height:51px;background:#C8C8C8"></div>
<div class="a" style="left:490px;top:4px;width:48px;height:16px;background:#D4D0C8;border-top:1px solid #fff;border-left:1px solid #fff;border-right:1px solid #404040;border-bottom:1px solid #404040;box-shadow:inset -1px -1px 0 #808080;text-align:center;line-height:15px;font-size:11px;white-space:nowrap;overflow:visible"><span style="display:inline-block;width:48px">Ang(I)</span></div>
<div class="a" style="left:490px;top:21px;width:48px;height:15px;text-align:center;line-height:17px;font-size:11px;white-space:nowrap">-15.545</div>
<div class="vl" style="left:539px;top:20px;height:51px;background:#C8C8C8"></div>
<div class="a" style="left:538px;top:4px;width:44px;height:16px;background:#D4D0C8;border-top:1px solid #fff;border-left:1px solid #fff;border-right:1px solid #404040;border-bottom:1px solid #404040;box-shadow:inset -1px -1px 0 #808080;text-align:center;line-height:15px;font-size:11px;white-space:nowrap;overflow:visible"><span style="display:inline-block;width:44px">Re(Zs)</span></div>
<div class="a" style="left:538px;top:21px;width:44px;height:15px;text-align:center;line-height:17px;font-size:11px;white-space:nowrap">50</div>
<div class="vl" style="left:583px;top:20px;height:51px;background:#C8C8C8"></div>
<div class="a" style="left:582px;top:4px;width:45px;height:16px;background:#D4D0C8;border-top:1px solid #fff;border-left:1px solid #fff;border-right:1px solid #404040;border-bottom:1px solid #404040;box-shadow:inset -1px -1px 0 #808080;text-align:center;line-height:15px;font-size:11px;white-space:nowrap;overflow:visible"><span style="display:inline-block;width:45px">Im(Zs)</span></div>
<div class="a" style="left:582px;top:21px;width:45px;height:15px;text-align:center;line-height:17px;font-size:11px;white-space:nowrap"></div>
<div class="vl" style="left:628px;top:20px;height:51px;background:#C8C8C8"></div>
<div class="hl" style="left:0;top:36px;width:595px;background:#C8C8C8"></div>
<div class="hl" style="left:0;top:50px;width:595px;background:#C8C8C8"></div>
<div class="hl" style="left:0;top:64px;width:595px;background:#C8C8C8"></div>
</div>
<div class="a" style="left:414px;top:627px;width:594px;height:4px;background:#D4D0C8"></div>
<div class="a" style="left:414px;top:697px;width:594px;height:16px;background:repeating-conic-gradient(#fff 0 25%,#D4D0C8 0 50%) 0 0/2px 2px"></div>
<div class="a raised" style="left:414px;top:697px;width:16px;height:16px"></div><svg class="a" width="16" height="16" style="left:414px;top:697px"><path d="M5 8l4-4v8z" fill="#000"/></svg>
<div class="a raised" style="left:430px;top:697px;width:513px;height:16px"></div>
<div class="a raised" style="left:991px;top:697px;width:17px;height:16px"></div><svg class="a" width="16" height="16" style="left:991px;top:697px"><path d="M7 4l4 4-4 4z" fill="#000"/></svg>
<div class="hl" style="left:408px;top:714px;width:616px;background:#fff"></div>
<div class="vl" style="left:1015px;top:625px;height:90px;background:#fff"></div><div class="vl" style="left:1018px;top:625px;height:90px;background:#808080"></div>
<div class="vl" style="left:408px;top:625px;height:90px;background:#808080"></div>

<!-- message pane left bottom -->
<div class="a" style="left:0;top:564px;width:408px;height:154px;background:#D4D0C8"></div>
<div class="a raised" style="left:1px;top:565px;width:17px;height:13px"></div><svg class="a" width="17" height="13" style="left:1px;top:565px"><path d="M10 3v7l-4-3.5z" fill="#000"/></svg>
<div class="hl" style="left:0;top:579px;width:22px;background:#808080"></div>
<div class="hl" style="left:16px;top:584px;width:392px;background:#fff"></div>
<div class="vl" style="left:16px;top:584px;height:110px;background:#fff"></div>
<div class="a" style="left:19px;top:589px;width:389px;height:103px;background:#fff;border-left:1px solid #404040;border-top:1px solid #404040"></div>
<svg class="a" width="10" height="8" style="left:4px;top:587px"><path d="M1 1l6 6M7 1L1 7" stroke="#000" stroke-width="1.6"/></svg>
<div class="a" style="left:1px;top:599px;width:14px;height:116px;background:linear-gradient(to bottom,#D4D0C8 0%,#808080 30%,#A8A8A8 100%)"></div>
<div class="t" style="left:-27px;top:676px;width:70px;height:14px;line-height:14px;font-size:12px;color:#E8E8E8;transform:rotate(-90deg);transform-origin:50% 50%;text-align:center">Information</div>
<div class="a" style="left:155px;top:672px;width:250px;height:17px;background:#D4D0C8;border-bottom:1px solid #404040"></div>
<div class="t" style="left:159px;top:672px;font-size:11px">Select Polygon Mode</div>
<div class="hl" style="left:17px;top:693px;width:390px;background:#404040"></div>
<div class="a" style="left:17px;top:693px;width:56px;height:22px;background:#D4D0C8;border-left:1px solid #fff;border-right:1px solid #404040;border-bottom:1px solid #404040"></div>
<div class="t" style="left:24px;top:699px;font-size:11.5px">Message</div>
<div class="a" style="left:74px;top:694px;width:55px;height:18px;background:#D4D0C8;border-left:1px solid #fff;border-right:1px solid #404040;border-bottom:1px solid #404040;box-shadow:inset -1px -1px 0 #808080"></div>
<div class="t" style="left:78px;top:697px;font-size:11px">Geometry</div>
<div class="a" style="left:130px;top:694px;width:78px;height:18px;background:#D4D0C8;border-left:1px solid #fff;border-right:1px solid #404040;border-bottom:1px solid #404040;box-shadow:inset -1px -1px 0 #808080"></div>
<div class="t" style="left:135px;top:697px;font-size:11px">Metallic Types</div>
<div class="a" style="left:210px;top:694px;width:61px;height:18px;background:#D4D0C8;border-left:1px solid #fff;border-right:1px solid #404040;border-bottom:1px solid #404040;box-shadow:inset -1px -1px 0 #808080"></div>
<div class="t" style="left:215px;top:697px;font-size:11px">Substrates</div>
<div class="a" style="left:272px;top:694px;width:53px;height:18px;background:#D4D0C8;border-left:1px solid #fff;border-right:1px solid #404040;border-bottom:1px solid #404040;box-shadow:inset -1px -1px 0 #808080"></div>
<div class="t" style="left:277px;top:697px;font-size:11px">Task List</div>
<div class="vl" style="left:405px;top:584px;height:131px;background:#808080"></div>
<div class="hl" style="left:0;top:716px;width:408px;background:#fff"></div>

<!-- main status bar -->
<div class="t" style="left:2px;top:723px;font-size:11px">Drawing Mode</div>
<div class="stat" style="left:407px;top:722px;width:106px;height:16px">For Help, press F1</div>
<div class="stat" style="left:516px;top:722px;width:145px;height:16px">Angles : (4, 44, 0)</div>
<div class="stat" style="left:663px;top:722px;width:166px;height:16px">Scale : (100%, 100%, 100%)</div>
<div class="stat" style="left:831px;top:722px;width:68px;height:16px">100%</div>
<svg class="a" width="14" height="14" style="left:1005px;top:723px"><path d="M13 1L1 13M13 5L5 13M13 9L9 13" stroke="#fff" stroke-width="1"/><path d="M13 2L2 13M13 6L6 13M13 10L10 13" stroke="#808080" stroke-width="1"/></svg>

<!-- taskbar -->
<div class="hl" style="left:0;top:739px;width:1024px;background:#fff"></div>
<div class="tk" style="left:2px;width:51px;padding-left:0"></div>
<svg class="a" width="16" height="16" style="left:4px;top:744px"><path d="M1 3q3-2 6 0v5q-3-2-6 0z" fill="#F04020"/><path d="M8 3q3-2 6 0v5q-3-2-6 0z" fill="#40B020"/><path d="M1 9q3-2 6 0v5q-3-2-6 0z" fill="#2060F0"/><path d="M8 9q3-2 6 0v5q-3-2-6 0z" fill="#F0C010"/></svg>
<div class="t" style="left:21px;top:745px;font-size:12px;font-weight:bold">Пуск</div>
<svg class="a" width="17" height="17" style="left:61px;top:745px"><path d="M2 2h9l3 3v6H2z" fill="#E8E0D0" stroke="#606060" stroke-width="0.8"/><path d="M5 8h6v4h3l-6 5-6-5h3z" fill="#2080E0" stroke="#104080" stroke-width="0.6"/></svg>
<svg class="a" width="17" height="17" style="left:83px;top:745px"><path d="M2 12L12 2l3 3L5 15H2z" fill="#F0B030" stroke="#805010" stroke-width="0.8"/><path d="M4 10l6-6" stroke="#fff" stroke-width="0.8"/></svg>
<svg class="a" width="17" height="17" style="left:106px;top:745px"><ellipse cx="8.5" cy="9" rx="6.5" ry="6" fill="#2A7FE0"/><ellipse cx="8.5" cy="9" rx="3.5" ry="3" fill="#fff"/><path d="M5 9h7" stroke="#2A7FE0" stroke-width="1.5"/><path d="M11 12h3" stroke="#fff" stroke-width="2"/><path d="M2 14q6-12 14-11" stroke="#F0C020" stroke-width="1" fill="none"/></svg>
<div class="t" style="left:134px;top:741px;font-size:12px;font-weight:bold">»</div>
<div class="tk" style="left:147px;width:88px"></div>
<svg class="a" width="16" height="16" style="left:152px;top:745px"><rect x="2" y="1" width="12" height="14" rx="1" fill="#4080D0"/><path d="M8 3l3 4-3 5-3-5z" fill="#E04020"/><rect x="4" y="12" width="8" height="2" fill="#F0E0A0"/></svg>
<div class="t" style="left:170px;top:746px;font-size:12px">Пасьянс ...</div>
<div class="tk" style="left:238px;width:88px"></div>
<svg class="a" width="16" height="16" style="left:243px;top:745px"><path d="M1 4h5l1 1h8v9H1z" fill="#F0D870" stroke="#806020" stroke-width="0.8"/><path d="M1 7h14v7H1z" fill="#F8E890" stroke="#806020" stroke-width="0.8"/></svg>
<div class="t" style="left:261px;top:746px;font-size:12px">AmpTube</div>
<div class="tk" style="left:328px;width:86px"></div>
<svg class="a" width="16" height="16" style="left:333px;top:745px"><path d="M3 2h9l2 2v10H3z" fill="#fff" stroke="#404040" stroke-width="0.8"/><circle cx="7" cy="9" r="4.5" fill="none" stroke="#1060D0" stroke-width="1.8"/><path d="M3 9h8" stroke="#1060D0" stroke-width="1.4"/></svg>
<div class="t" style="left:351px;top:746px;font-size:12px">Панельн...</div>
<div class="tk" style="left:417px;width:87px"></div>
<svg class="a" width="16" height="16" style="left:421px;top:745px"><text x="0" y="5" font-family="Liberation Sans" font-weight="bold" font-size="5" fill="#B00000">ZELAND</text><path d="M1 14l3-7h10l-3 7z" fill="#40A0E0" stroke="#204080" stroke-width="0.8"/><path d="M5 9h7M4 11h7" stroke="#fff" stroke-width="0.8"/></svg>
<div class="t" style="left:440px;top:746px;font-size:12px">Zeland Pr...</div>
<div class="tk" style="left:507px;width:87px"></div>
<svg class="a" width="16" height="16" style="left:511px;top:745px"><text x="1" y="6" font-family="Liberation Sans" font-weight="bold" font-size="6.5" fill="#D02020">ZLR</text><ellipse cx="8" cy="11.5" rx="7" ry="4" fill="#E0D020" stroke="#207020" stroke-width="1.2"/><path d="M4 11q4-3 8 1" stroke="#207020" stroke-width="1.5" fill="none"/></svg>
<div class="t" style="left:530px;top:746px;font-size:12px">colobozo....</div>
<div class="tk" style="left:598px;width:87px"></div>
<svg class="a" width="16" height="16" style="left:602px;top:745px"><text x="1" y="6" font-family="Liberation Sans" font-weight="bold" font-size="6.5" fill="#D02020">ZLR</text><ellipse cx="8" cy="11.5" rx="7" ry="4" fill="#E0D020" stroke="#207020" stroke-width="1.2"/><path d="M4 11q4-3 8 1" stroke="#207020" stroke-width="1.5" fill="none"/></svg>
<div class="t" style="left:621px;top:746px;font-size:12px">colobozo:...</div>
<div class="tk" style="left:688px;width:87px;background:repeating-conic-gradient(#fff 0 25%,#E0DED8 0 50%) 0 0/2px 2px;border-top:1px solid #404040;border-left:1px solid #404040;border-right:1px solid #fff;border-bottom:1px solid #fff;box-shadow:inset 1px 1px 0 #808080"></div>
<svg class="a" width="16" height="16" style="left:693px;top:746px"><text x="3" y="5" font-family="Liberation Sans" font-weight="bold" font-size="5" fill="#2020C0">ZLR</text><ellipse cx="5" cy="9" rx="4" ry="3" fill="#30D030"/><ellipse cx="11" cy="9" rx="4" ry="3" fill="#F0E020"/><ellipse cx="6" cy="13" rx="4" ry="3" fill="#F0F000"/><ellipse cx="12" cy="13" rx="4" ry="3" fill="#20C040"/><rect x="2" y="7" width="3" height="3" fill="#2040F0"/></svg>
<div class="t" style="left:712px;top:746px;font-size:11px;font-weight:bold">PatternV...</div>
<div class="tk" style="left:780px;width:87px"></div>
<svg class="a" width="16" height="16" style="left:784px;top:745px"><text x="3" y="5" font-family="Liberation Sans" font-weight="bold" font-size="5" fill="#B00000">ZLR</text><circle cx="8" cy="10" r="6" fill="#3080E0" stroke="#1050A0" stroke-width="0.8"/><path d="M2 10h12M8 4v12M4 6q4 4 8 0M4 14q4-4 8 0" stroke="#fff" stroke-width="0.8" fill="none"/></svg>
<div class="t" style="left:803px;top:746px;font-size:12px">colobozo ...</div>
<div class="a" style="left:879px;top:746px;width:17px;height:15px;background:#0A246A;color:#fff;font-size:11px;line-height:15px;text-align:center">EN</div>
<div class="a sunk" style="left:906px;top:742px;width:118px;height:22px"></div>
<svg class="a" width="17" height="17" style="left:908px;top:744px"><rect x="5" y="1" width="9" height="8" fill="#5060A0" stroke="#202050" stroke-width="0.8"/><rect x="1" y="6" width="9" height="8" fill="#3040A0" stroke="#202050" stroke-width="0.8"/><rect x="3" y="14" width="6" height="2" fill="#808080"/></svg>
<svg class="a" width="17" height="17" style="left:927px;top:744px"><rect x="4" y="1" width="10" height="8" fill="#F0E060" stroke="#606060" stroke-width="0.8"/><rect x="1" y="9" width="15" height="6" fill="#A0B0D0" stroke="#404060" stroke-width="0.8"/><path d="M4 12h5" stroke="#E02020" stroke-width="1.5"/></svg>
<svg class="a" width="17" height="17" style="left:945px;top:744px"><circle cx="8" cy="8" r="6" fill="#A0A0A0" stroke="#404040" stroke-width="0.8"/><circle cx="8" cy="8" r="3" fill="#E0E0E0" stroke="#606060" stroke-width="0.8"/><path d="M12 12l3 3" stroke="#4060C0" stroke-width="1.5"/></svg>
<svg class="a" width="17" height="17" style="left:963px;top:744px"><rect x="2" y="1" width="13" height="15" fill="#F8A020" stroke="#B06000" stroke-width="0.8"/><rect x="2" y="1" width="3" height="15" fill="#E07000"/></svg>
<div class="t" style="left:986px;top:746px;font-size:12px">16:44</div>

<!-- ===== PATTERNVIEW WINDOW ===== -->
<div class="a raised" style="left:23px;top:23px;width:646px;height:650px"></div>
<div class="a" style="left:26px;top:26px;width:640px;height:18px;background:linear-gradient(to right,#0A246A,#A6CAF0)"></div>
<div class="t" style="left:45px;top:28px;font-weight:bold;font-size:12px;color:#fff">PatternView - [PatView1:2]</div>
<svg class="a" width="17" height="17" style="left:27px;top:27px"><rect x="6" y="0" width="4" height="3" fill="#C00000"/><rect x="4" y="2" width="8" height="4" fill="#E04040"/><ellipse cx="5" cy="9" rx="4" ry="3" fill="#30D030"/><ellipse cx="11" cy="9" rx="4" ry="3" fill="#F0E020"/><ellipse cx="6" cy="13" rx="4" ry="3" fill="#F0F000"/><ellipse cx="12" cy="13" rx="4" ry="3" fill="#20C040"/><rect x="2" y="7" width="3" height="3" fill="#2040F0"/><circle cx="13" cy="13" r="1.5" fill="#000080"/></svg>
<svg class="a" width="18" height="16" style="left:28px;top:47px"><rect x="1.5" y="1.5" width="14" height="12" fill="#F0F4FF" stroke="#4070B0"/><rect x="1" y="1" width="15" height="2" fill="#3060A0"/></svg>
<div class="tb" style="left:613px;top:28px"><svg width="16" height="14" style="position:absolute;left:-1px;top:-1px"><rect x="4" y="9" width="6" height="2" fill="#000"/></svg></div>
<div class="tb" style="left:629px;top:28px"><svg width="16" height="14" style="position:absolute;left:-1px;top:-1px"><path d="M3.5 2.5h9v8h-9z" fill="none" stroke="#000"/><rect x="3" y="2" width="10" height="2" fill="#000"/></svg></div>
<div class="tb" style="left:647px;top:28px"><svg width="16" height="14" style="position:absolute;left:-1px;top:-1px"><path d="M4.5 3.5L11.5 10.5M11.5 3.5L4.5 10.5" stroke="#000" stroke-width="1.6"/></svg></div>
<div class="t" style="left:51px;top:47px;font-size:11px">File</div>
<div class="t" style="left:79px;top:47px;font-size:11px">View</div>
<div class="t" style="left:113px;top:47px;font-size:11px">Window</div>
<div class="t" style="left:163px;top:47px;font-size:11px">Help</div>
<div class="tb" style="left:613px;top:47px"><svg width="16" height="14" style="position:absolute;left:-1px;top:-1px"><rect x="4" y="9" width="6" height="2" fill="#000"/></svg></div>
<div class="tb" style="left:629px;top:47px"><svg width="16" height="14" style="position:absolute;left:-1px;top:-1px"><path d="M5.5 1.5h6v5h-6z" fill="none" stroke="#000"/><rect x="5" y="1" width="7" height="2" fill="#000"/><path d="M2.5 5.5h6v5h-6z" fill="#D4D0C8" stroke="#000"/><rect x="2" y="5" width="7" height="2" fill="#000"/></svg></div>
<div class="tb" style="left:647px;top:47px"><svg width="16" height="14" style="position:absolute;left:-1px;top:-1px"><path d="M4.5 3.5L11.5 10.5M11.5 3.5L4.5 10.5" stroke="#000" stroke-width="1.6"/></svg></div>
<div class="hl" style="left:26px;top:64px;width:640px;background:#808080"></div>
<div class="hl" style="left:26px;top:65px;width:640px;background:#fff"></div>
<div class="hl" style="left:26px;top:94px;width:640px;background:#808080"></div>
<div class="hl" style="left:26px;top:95px;width:640px;background:#fff"></div>
<div class="hl" style="left:26px;top:124px;width:640px;background:#808080"></div>
<div class="hl" style="left:26px;top:125px;width:640px;background:#fff"></div>
<div class="a raised" style="left:32px;top:69px;width:23px;height:22px"></div><svg class="a" width="16" height="16" style="left:35px;top:72px"><path d="M3.5 1.5h6l3 3v10h-9z" fill="#fff" stroke="#000"/><path d="M9.5 1.5v3h3" fill="none" stroke="#000"/></svg>
<div class="a raised" style="left:55px;top:69px;width:23px;height:22px"></div><svg class="a" width="16" height="16" style="left:58px;top:72px"><path d="M1.5 5.5l1-2h4l1 1h5v2" fill="#FFFF99" stroke="#000"/><path d="M1.5 14.5v-9h11v1" fill="#FFFF99" stroke="#000"/><path d="M1.5 14.5l3-7h11l-3 7z" fill="#808000" stroke="#000"/><path d="M9 3q3-3 5 0" fill="none" stroke="#000"/><path d="M13 1.5l1.5 2-2 .5" fill="none" stroke="#000"/></svg>
<div class="a raised" style="left:78px;top:69px;width:23px;height:22px"></div><svg class="a" width="16" height="16" style="left:81px;top:72px"><path d="M1.5 1.5h13v13h-13z" fill="#808000" stroke="#000"/><rect x="4" y="2" width="8" height="6" fill="#fff"/><rect x="4" y="10" width="8" height="4" fill="#000"/><rect x="9" y="11" width="2" height="3" fill="#fff"/></svg>
<div class="a raised" style="left:109px;top:69px;width:23px;height:22px"></div><svg class="a" width="16" height="16" style="left:112px;top:72px"><g stroke="#A0A0A0" fill="none"><path d="M5 1l4 9M11 1l-4 9"/><circle cx="5.5" cy="12.5" r="2"/><circle cx="10.5" cy="12.5" r="2"/></g><path d="M6 2l3 8M11 2l-3 8" stroke="#fff" stroke-width="0.6" fill="none"/></svg>
<div class="a raised" style="left:140px;top:69px;width:23px;height:22px"></div><svg class="a" width="16" height="16" style="left:143px;top:72px"><path d="M1.5 1.5h5l2 2v7h-7z" fill="#D4D0C8" stroke="#A0A0A0"/><path d="M6.5 5.5h5l2 2v7h-7z" fill="#D4D0C8" stroke="#A0A0A0"/><path d="M8 9h4M8 11h4M8 13h4" stroke="#A0A0A0"/></svg>
<div class="a raised" style="left:163px;top:69px;width:23px;height:22px"></div><svg class="a" width="16" height="16" style="left:166px;top:72px"><path d="M1.5 2.5h10v11h-10z" fill="#808000" stroke="#000"/><path d="M4.5 1.5h4v2h-4z" fill="#D4D0C8" stroke="#000"/><path d="M7.5 7.5h7v7h-7z" fill="#fff" stroke="#000080"/><path d="M9 10h4M9 12h4" stroke="#000080"/></svg>
<div class="vl" style="left:192px;top:66px;height:28px;background:#808080"></div><div class="vl" style="left:193px;top:66px;height:28px;background:#fff"></div>
<div class="a raised" style="left:32px;top:99px;width:23px;height:22px"></div><svg class="a" width="16" height="16" style="left:35px;top:102px"><path d="M1.5 1.5h13v13h-13z" fill="#808000" stroke="#000"/><rect x="4" y="2" width="8" height="6" fill="#fff"/><rect x="4" y="10" width="8" height="4" fill="#000"/><rect x="9" y="11" width="2" height="3" fill="#fff"/></svg>
<div class="a raised" style="left:63px;top:99px;width:23px;height:22px"></div><svg class="a" width="16" height="16" style="left:66px;top:102px"><text x="0" y="13" font-family="Liberation Sans" font-size="13" fill="#0000C0" textLength="16" lengthAdjust="spacingAndGlyphs" transform="scale(1,1.1)">ALL</text></svg>
<div class="a raised" style="left:86px;top:99px;width:23px;height:22px"></div><svg class="a" width="16" height="16" style="left:89px;top:102px"><circle cx="6.5" cy="6.5" r="4.5" fill="#fff" stroke="#000" stroke-width="1.2"/><path d="M10 10l4.5 4.5" stroke="#000" stroke-width="2"/><path d="M4.5 6.5h4M6.5 4.5v4" stroke="#0000C0" stroke-width="1.2"/></svg>
<div class="a raised" style="left:109px;top:99px;width:23px;height:22px"></div><svg class="a" width="16" height="16" style="left:112px;top:102px"><circle cx="6.5" cy="6.5" r="4.5" fill="#fff" stroke="#000" stroke-width="1.2"/><path d="M10 10l4.5 4.5" stroke="#000" stroke-width="2"/><path d="M4 6.5h5" stroke="#C00000" stroke-width="1.4"/></svg>
<div class="a raised" style="left:140px;top:99px;width:23px;height:22px"></div><svg class="a" width="16" height="16" style="left:143px;top:102px"><path d="M8 8V2M8 8l-5 5M8 8l5 5" stroke="#E02020" stroke-width="1.2" fill="none"/><text x="9" y="5" font-size="5" font-family="Liberation Sans" fill="#000080">z</text><text x="1" y="12" font-size="5" font-family="Liberation Sans" fill="#000080">x</text><text x="12" y="12" font-size="5" font-family="Liberation Sans" fill="#000080">y</text></svg>
<div class="a raised" style="left:186px;top:99px;width:23px;height:22px"></div><svg class="a" width="16" height="16" style="left:189px;top:102px"><path d="M1 14L6 4v10z" fill="#C00000" stroke="#000080"/><path d="M8 14V8l7 6z" fill="none" stroke="#0000C0" stroke-width="1.4"/><path d="M14 7q-1-4-5-4" fill="none" stroke="#0000C0" stroke-width="1.3"/><path d="M9 1l-2 2 2 2" fill="none" stroke="#0000C0" stroke-width="1.3"/></svg>
<div class="a raised" style="left:217px;top:99px;width:23px;height:22px"></div><svg class="a" width="16" height="16" style="left:220px;top:102px"><path d="M8 2c3 0 4 2 4 4s-1 3-2 4v3h-4v-3c-1-1-2-2-2-4s1-4 4-4z" fill="#808080"/></svg>
<div class="a raised" style="left:248px;top:99px;width:23px;height:22px"></div><svg class="a" width="16" height="16" style="left:251px;top:102px"><path d="M1.5 8.5l5-5 5 5-5 5z" fill="#fff" stroke="#000"/><path d="M6 3V0" stroke="#000"/><rect x="9.5" y="8.5" width="6" height="6" fill="#008080" stroke="#000"/><path d="M11 5v3" stroke="#000" stroke-width="2"/></svg>
<div class="a" style="left:163px;top:99px;width:23px;height:22px;border-top:1px solid #404040;border-left:1px solid #404040;border-right:1px solid #fff;border-bottom:1px solid #fff;box-shadow:inset 1px 1px 0 #808080;background:repeating-conic-gradient(#fff 0 25%,#D4D0C8 0 50%) 0 0/2px 2px"></div><svg class="a" width="16" height="16" style="left:167px;top:103px"><rect x="4" y="3" width="8" height="1.5" fill="#E02020"/><rect x="4" y="5.5" width="8" height="1.5" fill="#FF8000"/><rect x="4" y="8" width="8" height="1.5" fill="#E0E000"/><rect x="4" y="10.5" width="8" height="1.5" fill="#20C020"/><rect x="4" y="13" width="8" height="1.5" fill="#40E0E0"/></svg>

<!-- legend -->
<div class="a sunk" style="left:27px;top:128px;width:156px;height:21px"></div><div class="a" style="left:183px;top:127px;width:3px;height:505px;background:#F4F4F4"></div>
<div class="t" style="left:28px;top:130px;font-size:11px">E-total, dBi(Gain)</div>
<div class="a sunk2" style="left:27px;top:151px;width:156px;height:423px;background:#fff"></div><div class="a" style="left:29px;top:153px;width:40px;height:20px;background:#FF3300"></div>
<div class="t" style="left:80px;top:156px;font-size:11px;color:#1A1A8C">8.69039</div>
<div class="a" style="left:29px;top:173px;width:40px;height:20px;background:#FF6600"></div>
<div class="t" style="left:80px;top:176px;font-size:11px;color:#1A1A8C">7.69039</div>
<div class="a" style="left:29px;top:193px;width:40px;height:20px;background:#FF9900"></div>
<div class="t" style="left:80px;top:196px;font-size:11px;color:#1A1A8C">6.69039</div>
<div class="a" style="left:29px;top:213px;width:40px;height:20px;background:#FFCC00"></div>
<div class="t" style="left:80px;top:216px;font-size:11px;color:#1A1A8C">5.69039</div>
<div class="a" style="left:29px;top:233px;width:40px;height:20px;background:#FFFF00"></div>
<div class="t" style="left:80px;top:236px;font-size:11px;color:#1A1A8C">4.69039</div>
<div class="a" style="left:29px;top:253px;width:40px;height:20px;background:#CCFF00"></div>
<div class="t" style="left:80px;top:256px;font-size:11px;color:#1A1A8C">3.69039</div>
<div class="a" style="left:29px;top:273px;width:40px;height:20px;background:#99FF00"></div>
<div class="t" style="left:80px;top:276px;font-size:11px;color:#1A1A8C">2.69039</div>
<div class="a" style="left:29px;top:293px;width:40px;height:20px;background:#66FF00"></div>
<div class="t" style="left:80px;top:296px;font-size:11px;color:#1A1A8C">1.69039</div>
<div class="a" style="left:29px;top:313px;width:40px;height:20px;background:#33FF00"></div>
<div class="t" style="left:80px;top:316px;font-size:11px;color:#1A1A8C">0.69039</div>
<div class="a" style="left:29px;top:333px;width:40px;height:20px;background:#00FF00"></div>
<div class="t" style="left:79px;top:336px;font-size:11px;color:#1A1A8C">-0.30961</div>
<div class="a" style="left:29px;top:353px;width:40px;height:20px;background:#00FF33"></div>
<div class="t" style="left:79px;top:356px;font-size:11px;color:#1A1A8C">-1.30961</div>
<div class="a" style="left:29px;top:373px;width:40px;height:20px;background:#00FF66"></div>
<div class="t" style="left:79px;top:376px;font-size:11px;color:#1A1A8C">-2.30961</div>
<div class="a" style="left:29px;top:393px;width:40px;height:20px;background:#00FF99"></div>
<div class="t" style="left:79px;top:396px;font-size:11px;color:#1A1A8C">-3.30961</div>
<div class="a" style="left:29px;top:413px;width:40px;height:20px;background:#00FFCC"></div>
<div class="t" style="left:79px;top:416px;font-size:11px;color:#1A1A8C">-4.30961</div>
<div class="a" style="left:29px;top:433px;width:40px;height:20px;background:#00FFFF"></div>
<div class="t" style="left:79px;top:436px;font-size:11px;color:#1A1A8C">-5.30961</div>
<div class="a" style="left:29px;top:453px;width:40px;height:20px;background:#00CCFF"></div>
<div class="t" style="left:79px;top:456px;font-size:11px;color:#1A1A8C">-6.30961</div>
<div class="a" style="left:29px;top:473px;width:40px;height:20px;background:#0099FF"></div>
<div class="t" style="left:79px;top:476px;font-size:11px;color:#1A1A8C">-7.30961</div>
<div class="a" style="left:29px;top:493px;width:40px;height:20px;background:#0066FF"></div>
<div class="t" style="left:79px;top:496px;font-size:11px;color:#1A1A8C">-8.30961</div>
<div class="a" style="left:29px;top:513px;width:40px;height:20px;background:#0033FF"></div>
<div class="t" style="left:79px;top:516px;font-size:11px;color:#1A1A8C">-9.30961</div>
<div class="a" style="left:29px;top:533px;width:40px;height:20px;background:#0000FF"></div>
<div class="a" style="left:78px;top:533px;width:103px;height:20px;background:#0000FF"></div>
<div class="t" style="left:79px;top:536px;font-size:11px;color:#fff">-10.3096</div>
<div class="a sunk" style="left:27px;top:576px;width:156px;height:56px"></div>
<div class="t" style="left:28px;top:577px;font-size:11px;line-height:13px">Pattern ID: colobozo<br>Freq: 2.5 (GHz)<br>Magnitude: E-total<br>Color: dBi(Gain)</div>

<!-- 3D view -->
<div class="a" style="left:186px;top:128px;width:478px;height:504px;background:#000;overflow:hidden"><svg width="478" height="504" style="position:absolute;left:0;top:0"><defs><radialGradient id="lg" gradientUnits="userSpaceOnUse" cx="58" cy="347" r="290"><stop offset="0" stop-color="#0040FF"/><stop offset="0.041" stop-color="#00C0FF"/><stop offset="0.103" stop-color="#00FF80"/><stop offset="0.172" stop-color="#00FF20"/><stop offset="0.241" stop-color="#80FF00"/><stop offset="0.31" stop-color="#E0FF00"/><stop offset="0.38" stop-color="#FFE000"/><stop offset="0.49" stop-color="#FF9000"/><stop offset="0.62" stop-color="#FF5400"/><stop offset="0.75" stop-color="#FF2C00"/><stop offset="1" stop-color="#FF1000"/></radialGradient><pattern id="hatch" width="3" height="3.5" patternUnits="userSpaceOnUse" patternTransform="rotate(35)"><path d="M0 0.5H3M0.5 0V3.5" stroke="#D8F0FF" stroke-width="0.7"/></pattern></defs>
<line x1="58.5" y1="9" x2="58.5" y2="312" stroke="#fff" stroke-width="1"/>
<path d="M28 334 L141 325 L28 352 Z" fill="url(#lg)"/>
<path d="M50 290 Q22 302 14 322 Q15 342 27 356 L54 350 L64 292 Z" fill="#48B8F0"/>
<path d="M50 290 Q22 302 14 322 Q15 342 27 356 L54 350 L64 292 Z" fill="url(#hatch)"/>
<path d="M50 290 Q22 302 14 322 Q15 342 27 356" fill="none" stroke="#fff" stroke-width="1"/>
<path d="M19 312 L54 342 M16 320 L54 344 M15 329 L54 346 M17 338 L54 348 M29 302 L54 340 M38 296 L56 338 M22 348 L54 350" fill="none" stroke="#E0F0FF" stroke-width="1" opacity="0.85"/>
<g stroke="#fff" stroke-width="0.9" fill="url(#lg)"><polygon points="194.8,439.0 198.6,421.7 215.1,426.1 211.7,441.8"/><polygon points="198.6,421.7 203.8,404.9 219.9,410.7 215.1,426.1"/><polygon points="177.2,435.6 181.2,417.2 198.6,421.7 194.8,439.0"/><polygon points="181.2,417.2 186.7,399.2 203.8,404.9 198.6,421.7"/><polygon points="211.7,441.8 215.1,426.1 230.8,430.2 227.7,444.0"/><polygon points="215.1,426.1 219.9,410.7 234.9,416.6 230.8,430.2"/><polygon points="159.0,431.6 163.1,412.5 181.2,417.2 177.2,435.6"/><polygon points="163.1,412.5 168.9,393.8 186.7,399.2 181.2,417.2"/><polygon points="192.8,455.5 194.8,439.0 211.7,441.8 209.8,456.9"/><polygon points="203.8,404.9 210.0,389.5 225.6,396.6 219.9,410.7"/><polygon points="227.7,444.0 230.8,430.2 245.3,434.0 242.8,445.5"/><polygon points="230.8,430.2 234.9,416.6 248.8,422.7 245.3,434.0"/><polygon points="175.0,453.1 177.2,435.6 194.8,439.0 192.8,455.5"/><polygon points="186.7,399.2 193.4,382.9 210.0,389.5 203.8,404.9"/><polygon points="209.8,456.9 211.7,441.8 227.7,444.0 226.1,457.2"/><polygon points="219.9,410.7 225.6,396.6 240.0,404.3 234.9,416.6"/><polygon points="140.2,427.0 144.4,407.6 163.1,412.5 159.0,431.6"/><polygon points="144.4,407.6 150.2,388.5 168.9,393.8 163.1,412.5"/><polygon points="156.7,449.8 159.0,431.6 177.2,435.6 175.0,453.1"/><polygon points="168.9,393.8 175.8,376.8 193.4,382.9 186.7,399.2"/><polygon points="226.1,457.2 227.7,444.0 242.8,445.5 241.4,456.5"/><polygon points="234.9,416.6 240.0,404.3 253.0,412.4 248.8,422.7"/><polygon points="242.8,445.5 245.3,434.0 258.7,437.5 256.8,446.2"/><polygon points="245.3,434.0 248.8,422.7 261.3,428.9 258.7,437.5"/><polygon points="137.9,445.6 140.2,427.0 159.0,431.6 156.7,449.8"/><polygon points="150.2,388.5 157.3,371.2 175.8,376.8 168.9,393.8"/><polygon points="210.0,389.5 217.0,376.7 231.9,385.0 225.6,396.6"/><polygon points="192.5,470.0 192.8,455.5 209.8,456.9 209.6,470.1"/><polygon points="209.6,470.1 209.8,456.9 226.1,457.2 225.9,468.9"/><polygon points="225.6,396.6 231.9,385.0 245.5,394.0 240.0,404.3"/><polygon points="241.4,456.5 242.8,445.5 256.8,446.2 255.7,454.6"/><polygon points="248.8,422.7 253.0,412.4 264.5,421.1 261.3,428.9"/><polygon points="120.9,421.9 125.1,402.5 144.4,407.6 140.2,427.0"/><polygon points="125.1,402.5 130.9,383.6 150.2,388.5 144.4,407.6"/><polygon points="174.8,468.6 175.0,453.1 192.8,455.5 192.5,470.0"/><polygon points="193.4,382.9 200.8,369.3 217.0,376.7 210.0,389.5"/><polygon points="240.0,404.3 245.5,394.0 257.6,403.8 253.0,412.4"/><polygon points="225.9,468.9 226.1,457.2 241.4,456.5 241.3,466.3"/><polygon points="156.4,465.9 156.7,449.8 175.0,453.1 174.8,468.6"/><polygon points="175.8,376.8 183.5,362.6 200.8,369.3 193.4,382.9"/><polygon points="253.0,412.4 257.6,403.8 268.0,414.6 264.5,421.1"/><polygon points="241.3,466.3 241.4,456.5 255.7,454.6 255.6,461.9"/><polygon points="118.6,440.4 120.9,421.9 140.2,427.0 137.9,445.6"/><polygon points="130.9,383.6 138.0,366.3 157.3,371.2 150.2,388.5"/><polygon points="256.8,446.2 258.7,437.5 270.5,440.6 269.4,445.9"/><polygon points="258.7,437.5 261.3,428.9 272.1,435.4 270.5,440.6"/><polygon points="255.7,454.6 256.8,446.2 269.4,445.9 268.7,450.9"/><polygon points="261.3,428.9 264.5,421.1 274.0,430.6 272.1,435.4"/><polygon points="101.3,416.2 105.4,397.3 125.1,402.5 120.9,421.9"/><polygon points="105.4,397.3 111.1,378.9 130.9,383.6 125.1,402.5"/><polygon points="157.3,371.2 165.1,356.8 183.5,362.6 175.8,376.8"/><polygon points="137.6,461.9 137.9,445.6 156.7,449.8 156.4,465.9"/><polygon points="211.1,480.7 209.6,470.1 225.9,468.9 227.2,478.3"/><polygon points="231.9,385.0 238.4,376.4 251.2,386.5 245.5,394.0"/><polygon points="227.2,478.3 225.9,468.9 241.3,466.3 242.4,474.0"/><polygon points="245.5,394.0 251.2,386.5 262.4,397.6 257.6,403.8"/><polygon points="194.2,481.6 192.5,470.0 209.6,470.1 211.1,480.7"/><polygon points="217.0,376.7 224.1,367.4 238.4,376.4 231.9,385.0"/><polygon points="255.6,461.9 255.7,454.6 268.7,450.9 268.7,455.4"/><polygon points="264.5,421.1 268.0,414.6 276.2,426.7 274.0,430.6"/><polygon points="242.4,474.0 241.3,466.3 255.6,461.9 256.4,467.8"/><polygon points="257.6,403.8 262.4,397.6 271.6,409.9 268.0,414.6"/><polygon points="176.5,480.9 174.8,468.6 192.5,470.0 194.2,481.6"/><polygon points="200.8,369.3 208.4,359.3 224.1,367.4 217.0,376.7"/><polygon points="99.0,434.2 101.3,416.2 120.9,421.9 118.6,440.4"/><polygon points="111.1,378.9 117.9,362.1 138.0,366.3 130.9,383.6"/><polygon points="138.0,366.3 145.8,351.9 165.1,356.8 157.3,371.2"/><polygon points="118.4,456.7 118.6,440.4 137.9,445.6 137.6,461.9"/><polygon points="268.0,414.6 271.6,409.9 278.4,423.8 276.2,426.7"/><polygon points="256.4,467.8 255.6,461.9 268.7,455.4 269.2,459.0"/><polygon points="158.2,478.8 156.4,465.9 174.8,468.6 176.5,480.9"/><polygon points="183.5,362.6 191.3,352.3 208.4,359.3 200.8,369.3"/><polygon points="81.4,410.0 85.3,392.1 105.4,397.3 101.3,416.2"/><polygon points="85.3,392.1 90.7,374.6 111.1,378.9 105.4,397.3"/><polygon points="269.4,445.9 270.5,440.6 281.2,443.4 281.2,443.4"/><polygon points="270.5,440.6 272.1,435.4 281.2,443.4 281.2,443.4"/><polygon points="244.6,479.3 242.4,474.0 256.4,467.8 258.1,471.8"/><polygon points="262.4,397.6 266.9,394.1 275.0,407.2 271.6,409.9"/><polygon points="229.9,484.6 227.2,478.3 242.4,474.0 244.6,479.3"/><polygon points="251.2,386.5 256.7,382.3 266.9,394.1 262.4,397.6"/><polygon points="268.7,450.9 269.4,445.9 281.2,443.4 281.2,443.4"/><polygon points="272.1,435.4 274.0,430.6 281.2,443.4 281.2,443.4"/><polygon points="139.4,475.0 137.6,461.9 156.4,465.9 158.2,478.8"/><polygon points="165.1,356.8 173.1,346.3 191.3,352.3 183.5,362.6"/><polygon points="271.6,409.9 275.0,407.2 280.5,422.2 278.4,423.8"/><polygon points="258.1,471.8 256.4,467.8 269.2,459.0 270.2,461.4"/><polygon points="268.7,455.4 268.7,450.9 281.2,443.4 281.2,443.4"/><polygon points="274.0,430.6 276.2,426.7 281.2,443.4 281.2,443.4"/><polygon points="238.4,376.4 244.6,371.6 256.7,382.3 251.2,386.5"/><polygon points="214.2,488.0 211.1,480.7 227.2,478.3 229.9,484.6"/><polygon points="98.8,450.1 99.0,434.2 118.6,440.4 118.4,456.7"/><polygon points="117.9,362.1 125.5,348.1 145.8,351.9 138.0,366.3"/><polygon points="79.3,427.0 81.4,410.0 101.3,416.2 99.0,434.2"/><polygon points="90.7,374.6 97.2,358.7 117.9,362.1 111.1,378.9"/><polygon points="269.2,459.0 268.7,455.4 281.2,443.4 281.2,443.4"/><polygon points="276.2,426.7 278.4,423.8 281.2,443.4 281.2,443.4"/><polygon points="224.1,367.4 230.9,362.1 244.6,371.6 238.4,376.4"/><polygon points="197.5,489.5 194.2,481.6 211.1,480.7 214.2,488.0"/><polygon points="270.2,461.4 269.2,459.0 281.2,443.4 281.2,443.4"/><polygon points="278.4,423.8 280.5,422.2 281.2,443.4 281.2,443.4"/><polygon points="208.9,236.5 199.7,223.7 215.0,213.3 223.7,225.5"/><polygon points="199.7,223.7 191.1,210.5 206.7,200.7 215.0,213.3"/><polygon points="223.7,225.5 215.0,213.3 229.2,203.5 237.4,214.9"/><polygon points="215.0,213.3 206.7,200.7 221.6,191.8 229.2,203.5"/><polygon points="120.2,469.8 118.4,456.7 137.6,461.9 139.4,475.0"/><polygon points="145.8,351.9 153.8,341.5 173.1,346.3 165.1,356.8"/><polygon points="208.4,359.3 215.6,353.7 230.9,362.1 224.1,367.4"/><polygon points="180.1,489.4 176.5,480.9 194.2,481.6 197.5,489.5"/><polygon points="260.6,473.7 258.1,471.8 270.2,461.4 271.7,462.6"/><polygon points="275.0,407.2 278.1,406.8 282.3,422.0 280.5,422.2"/><polygon points="271.7,462.6 270.2,461.4 281.2,443.4 281.2,443.4"/><polygon points="280.5,422.2 282.3,422.0 281.2,443.4 281.2,443.4"/><polygon points="192.9,247.8 183.5,234.7 199.7,223.7 208.9,236.5"/><polygon points="183.5,234.7 174.8,221.3 191.1,210.5 199.7,223.7"/><polygon points="247.9,481.8 244.6,479.3 258.1,471.8 260.6,473.7"/><polygon points="266.9,394.1 271.0,393.5 278.1,406.8 275.0,407.2"/><polygon points="237.4,214.9 229.2,203.5 242.4,194.5 249.7,204.6"/><polygon points="229.2,203.5 221.6,191.8 235.6,184.1 242.4,194.5"/><polygon points="61.5,403.1 65.0,386.8 85.3,392.1 81.4,410.0"/><polygon points="65.0,386.8 69.9,370.8 90.7,374.6 85.3,392.1"/><polygon points="282.3,422.0 283.8,423.1 281.2,443.4 281.2,443.4"/><polygon points="273.6,462.3 271.7,462.6 281.2,443.4 281.2,443.4"/><polygon points="217.9,248.0 208.9,236.5 223.7,225.5 232.4,236.6"/><polygon points="191.1,210.5 183.7,197.9 199.6,188.5 206.7,200.7"/><polygon points="232.4,236.6 223.7,225.5 237.4,214.9 245.4,225.1"/><polygon points="206.7,200.7 199.6,188.5 215.0,180.6 221.6,191.8"/><polygon points="175.8,259.3 166.6,246.3 183.5,234.7 192.9,247.8"/><polygon points="166.6,246.3 157.9,233.0 174.8,221.3 183.5,234.7"/><polygon points="97.2,358.7 104.4,345.4 125.5,348.1 117.9,362.1"/><polygon points="79.1,442.1 79.3,427.0 99.0,434.2 98.8,450.1"/><polygon points="191.3,352.3 198.9,346.4 215.6,353.7 208.4,359.3"/><polygon points="162.0,487.5 158.2,478.8 176.5,480.9 180.1,489.4"/><polygon points="233.8,487.6 229.9,484.6 244.6,479.3 247.9,481.8"/><polygon points="256.7,382.3 261.6,381.6 271.0,393.5 266.9,394.1"/><polygon points="202.1,259.5 192.9,247.8 208.9,236.5 217.9,248.0"/><polygon points="174.8,221.3 167.2,208.4 183.7,197.9 191.1,210.5"/><polygon points="245.4,225.1 237.4,214.9 249.7,204.6 256.9,213.8"/><polygon points="221.6,191.8 215.0,180.6 229.7,174.0 235.6,184.1"/><polygon points="283.8,423.1 284.9,425.5 281.2,443.4 281.2,443.4"/><polygon points="275.7,460.7 273.6,462.3 281.2,443.4 281.2,443.4"/><polygon points="249.7,204.6 242.4,194.5 254.4,186.3 260.5,194.9"/><polygon points="242.4,194.5 235.6,184.1 248.7,177.5 254.4,186.3"/><polygon points="59.5,418.7 61.5,403.1 81.4,410.0 79.3,427.0"/><polygon points="69.9,370.8 75.9,356.3 97.2,358.7 90.7,374.6"/><polygon points="278.1,406.8 280.6,408.7 283.8,423.1 282.3,422.0"/><polygon points="263.7,473.3 260.6,473.7 271.7,462.6 273.6,462.3"/><polygon points="100.6,462.9 98.8,450.1 118.4,456.7 120.2,469.8"/><polygon points="125.5,348.1 133.3,337.9 153.8,341.5 145.8,351.9"/><polygon points="284.9,425.5 285.4,429.1 281.2,443.4 281.2,443.4"/><polygon points="277.8,457.8 275.7,460.7 281.2,443.4 281.2,443.4"/><polygon points="244.6,371.6 250.2,370.9 261.6,381.6 256.7,382.3"/><polygon points="218.6,491.3 214.2,488.0 229.9,484.6 233.8,487.6"/><polygon points="185.0,270.9 175.8,259.3 192.9,247.8 202.1,259.5"/><polygon points="157.9,233.0 150.4,220.3 167.2,208.4 174.8,221.3"/><polygon points="157.8,270.9 148.8,258.5 166.6,246.3 175.8,259.3"/><polygon points="148.8,258.5 140.5,245.6 157.9,233.0 166.6,246.3"/><polygon points="256.9,213.8 249.7,204.6 260.5,194.9 266.6,202.6"/><polygon points="235.6,184.1 229.7,174.0 243.7,169.1 248.7,177.5"/><polygon points="285.4,429.1 285.3,433.6 281.2,443.4 281.2,443.4"/><polygon points="280.0,453.9 277.8,457.8 281.2,443.4 281.2,443.4"/><polygon points="173.1,346.3 180.8,340.4 198.9,346.4 191.3,352.3"/><polygon points="143.2,484.0 139.4,475.0 158.2,478.8 162.0,487.5"/><polygon points="199.6,188.5 194.1,177.7 209.9,170.5 215.0,180.6"/><polygon points="240.5,245.7 232.4,236.6 245.4,225.1 252.9,233.6"/><polygon points="285.3,433.6 284.7,438.6 281.2,443.4 281.2,443.4"/><polygon points="281.9,449.2 280.0,453.9 281.2,443.4 281.2,443.4"/><polygon points="226.4,257.5 217.9,248.0 232.4,236.6 240.5,245.7"/><polygon points="183.7,197.9 177.9,186.6 194.1,177.7 199.6,188.5"/><polygon points="284.7,438.6 283.5,444.0 281.2,443.4 281.2,443.4"/><polygon points="283.5,444.0 281.9,449.2 281.2,443.4 281.2,443.4"/><polygon points="271.0,393.5 274.3,396.0 280.6,408.7 278.1,406.8"/><polygon points="251.9,481.3 247.9,481.8 260.6,473.7 263.7,473.3"/><polygon points="230.9,362.1 236.9,361.3 250.2,370.9 244.6,371.6"/><polygon points="202.4,493.2 197.5,489.5 214.2,488.0 218.6,491.3"/><polygon points="252.9,233.6 245.4,225.1 256.9,213.8 263.5,221.3"/><polygon points="215.0,180.6 209.9,170.5 225.1,165.1 229.7,174.0"/><polygon points="260.5,194.9 254.4,186.3 264.9,179.1 269.6,185.7"/><polygon points="254.4,186.3 248.7,177.5 260.5,172.4 264.9,179.1"/><polygon points="166.6,282.2 157.8,270.9 175.8,259.3 185.0,270.9"/><polygon points="140.5,245.6 133.2,233.3 150.4,220.3 157.9,233.0"/><polygon points="167.2,208.4 161.3,197.0 177.9,186.6 183.7,197.9"/><polygon points="210.7,269.2 202.1,259.5 217.9,248.0 226.4,257.5"/><polygon points="280.6,408.7 282.3,412.7 284.9,425.5 283.8,423.1"/><polygon points="267.1,470.6 263.7,473.3 273.6,462.3 275.7,460.7"/><polygon points="229.7,174.0 225.1,165.1 239.8,161.6 243.7,169.1"/><polygon points="263.5,221.3 256.9,213.8 266.6,202.6 272.2,208.9"/><polygon points="266.6,202.6 260.5,194.9 269.6,185.7 274.2,191.6"/><polygon points="248.7,177.5 243.7,169.1 256.7,166.0 260.5,172.4"/><polygon points="138.8,282.8 130.4,271.1 148.8,258.5 157.8,270.9"/><polygon points="130.4,271.1 122.5,259.0 140.5,245.6 148.8,258.5"/><polygon points="75.9,356.3 82.4,344.2 104.4,345.4 97.2,358.7"/><polygon points="59.3,432.5 59.5,418.7 79.3,427.0 79.1,442.1"/><polygon points="150.4,220.3 144.5,208.9 161.3,197.0 167.2,208.4"/><polygon points="193.5,280.5 185.0,270.9 202.1,259.5 210.7,269.2"/><polygon points="153.8,341.5 161.4,335.6 180.8,340.4 173.1,346.3"/><polygon points="124.0,478.7 120.2,469.8 139.4,475.0 143.2,484.0"/><polygon points="104.4,345.4 111.7,335.7 133.3,337.9 125.5,348.1"/><polygon points="80.8,454.2 79.1,442.1 98.8,450.1 100.6,462.9"/><polygon points="215.6,353.7 222.0,352.8 236.9,361.3 230.9,362.1"/><polygon points="185.3,493.3 180.1,489.4 197.5,489.5 202.4,493.2"/><polygon points="261.6,381.6 265.5,384.6 274.3,396.0 271.0,393.5"/><polygon points="238.7,486.9 233.8,487.6 247.9,481.8 251.9,481.3"/><polygon points="41.7,395.5 44.7,381.5 65.0,386.8 61.5,403.1"/><polygon points="44.7,381.5 49.0,367.7 69.9,370.8 65.0,386.8"/><polygon points="147.1,293.3 138.8,282.8 157.8,270.9 166.6,282.2"/><polygon points="122.5,259.0 115.7,247.4 133.2,233.3 140.5,245.6"/><polygon points="243.7,169.1 239.8,161.6 253.8,160.2 256.7,166.0"/><polygon points="272.2,208.9 266.6,202.6 274.2,191.6 278.5,196.4"/><polygon points="133.2,233.3 127.6,222.2 144.5,208.9 150.4,220.3"/><polygon points="174.8,291.4 166.6,282.2 185.0,270.9 193.5,280.5"/><polygon points="247.3,252.2 240.5,245.7 252.9,233.6 259.3,239.6"/><polygon points="194.1,177.7 190.5,169.0 206.5,162.4 209.9,170.5"/><polygon points="259.3,239.6 252.9,233.6 263.5,221.3 269.2,226.7"/><polygon points="209.9,170.5 206.5,162.4 222.2,157.9 225.1,165.1"/><polygon points="269.6,185.7 264.9,179.1 273.7,173.2 276.5,177.1"/><polygon points="264.9,179.1 260.5,172.4 271.0,169.0 273.7,173.2"/><polygon points="40.0,408.9 41.7,395.5 61.5,403.1 59.5,418.7"/><polygon points="49.0,367.7 54.1,355.3 75.9,356.3 69.9,370.8"/><polygon points="233.5,264.3 226.4,257.5 240.5,245.7 247.3,252.2"/><polygon points="177.9,186.6 174.1,177.4 190.5,169.0 194.1,177.7"/><polygon points="167.4,491.6 162.0,487.5 180.1,489.4 185.3,493.3"/><polygon points="198.9,346.4 205.6,345.5 222.0,352.8 215.6,353.7"/><polygon points="250.2,370.9 254.6,374.2 265.5,384.6 261.6,381.6"/><polygon points="224.2,490.6 218.6,491.3 233.8,487.6 238.7,486.9"/><polygon points="225.1,165.1 222.2,157.9 237.3,155.5 239.8,161.6"/><polygon points="269.2,226.7 263.5,221.3 272.2,208.9 277.0,213.5"/><polygon points="274.2,191.6 269.6,185.7 276.5,177.1 279.4,180.7"/><polygon points="260.5,172.4 256.7,166.0 268.7,165.1 271.0,169.0"/><polygon points="118.8,294.7 111.3,284.1 130.4,271.1 138.8,282.8"/><polygon points="111.3,284.1 104.2,273.2 122.5,259.0 130.4,271.1"/><polygon points="133.3,337.9 140.7,332.1 161.4,335.6 153.8,341.5"/><polygon points="104.3,471.5 100.6,462.9 120.2,469.8 124.0,478.7"/><polygon points="218.0,276.1 210.7,269.2 226.4,257.5 233.5,264.3"/><polygon points="161.3,197.0 157.5,187.6 174.1,177.4 177.9,186.6"/><polygon points="277.0,213.5 272.2,208.9 278.5,196.4 282.2,199.9"/><polygon points="239.8,161.6 237.3,155.5 251.9,155.5 253.8,160.2"/><polygon points="278.5,196.4 274.2,191.6 279.4,180.7 282.0,183.7"/><polygon points="256.7,166.0 253.8,160.2 266.9,161.6 268.7,165.1"/><polygon points="154.8,302.0 147.1,293.3 166.6,282.2 174.8,291.4"/><polygon points="115.7,247.4 110.4,237.1 127.6,222.2 133.2,233.3"/><polygon points="200.7,287.3 193.5,280.5 210.7,269.2 218.0,276.1"/><polygon points="144.5,208.9 140.8,199.6 157.5,187.6 161.3,197.0"/><polygon points="82.4,344.2 89.1,335.3 111.7,335.7 104.4,345.4"/><polygon points="60.9,443.5 59.3,432.5 79.1,442.1 80.8,454.2"/><polygon points="126.4,304.2 118.8,294.7 138.8,282.8 147.1,293.3"/><polygon points="104.2,273.2 98.0,262.7 115.7,247.4 122.5,259.0"/><polygon points="180.8,340.4 187.6,339.4 205.6,345.5 198.9,346.4"/><polygon points="148.7,488.1 143.2,484.0 162.0,487.5 167.4,491.6"/><polygon points="54.1,355.3 59.7,344.9 82.4,344.2 75.9,356.3"/><polygon points="39.8,420.7 40.0,408.9 59.5,418.7 59.3,432.5"/><polygon points="282.2,199.9 278.5,196.4 282.0,183.7 284.2,185.8"/><polygon points="253.8,160.2 251.9,155.5 265.7,158.7 266.9,161.6"/><polygon points="181.8,298.1 174.8,291.4 193.5,280.5 200.7,287.3"/><polygon points="127.6,222.2 123.9,213.3 140.8,199.6 144.5,208.9"/><polygon points="111.7,335.7 118.8,330.3 140.7,332.1 133.3,337.9"/><polygon points="84.2,462.4 80.8,454.2 100.6,462.9 104.3,471.5"/><polygon points="206.5,162.4 205.3,156.8 221.1,152.8 222.2,157.9"/><polygon points="264.1,242.8 259.3,239.6 269.2,226.7 273.5,229.6"/><polygon points="273.5,229.6 269.2,226.7 277.0,213.5 280.6,215.9"/><polygon points="222.2,157.9 221.1,152.8 236.4,151.2 237.3,155.5"/><polygon points="190.5,169.0 189.1,162.9 205.3,156.8 206.5,162.4"/><polygon points="252.5,255.7 247.3,252.2 259.3,239.6 264.1,242.8"/><polygon points="98.1,306.6 91.6,297.6 111.3,284.1 118.8,294.7"/><polygon points="91.6,297.6 85.5,288.2 104.2,273.2 111.3,284.1"/><polygon points="133.3,312.1 126.4,304.2 147.1,293.3 154.8,302.0"/><polygon points="98.0,262.7 93.3,253.4 110.4,237.1 115.7,247.4"/><polygon points="237.3,155.5 236.4,151.2 251.1,152.3 251.9,155.5"/><polygon points="280.6,215.9 277.0,213.5 282.2,199.9 285.0,201.8"/><polygon points="161.4,335.6 168.2,334.6 187.6,339.4 180.8,340.4"/><polygon points="129.4,482.8 124.0,478.7 143.2,484.0 148.7,488.1"/><polygon points="174.1,177.4 172.7,171.0 189.1,162.9 190.5,169.0"/><polygon points="239.0,268.0 233.5,264.3 247.3,252.2 252.5,255.7"/><polygon points="276.5,177.1 273.7,173.2 280.2,168.7 280.2,168.7"/><polygon points="273.7,173.2 271.0,169.0 280.2,168.7 280.2,168.7"/><polygon points="279.4,180.7 276.5,177.1 280.2,168.7 280.2,168.7"/><polygon points="271.0,169.0 268.7,165.1 280.2,168.7 280.2,168.7"/><polygon points="251.9,155.5 251.1,152.3 265.3,156.7 265.7,158.7"/><polygon points="285.0,201.8 282.2,199.9 284.2,185.8 285.9,187.0"/><polygon points="22.8,386.9 25.1,376.3 44.7,381.5 41.7,395.5"/><polygon points="25.1,376.3 28.3,366.0 49.0,367.7 44.7,381.5"/><polygon points="161.3,308.2 154.8,302.0 174.8,291.4 181.8,298.1"/><polygon points="110.4,237.1 107.0,228.7 123.9,213.3 127.6,222.2"/><polygon points="104.5,314.8 98.1,306.6 118.8,294.7 126.4,304.2"/><polygon points="85.5,288.2 80.2,279.2 98.0,262.7 104.2,273.2"/><polygon points="282.0,183.7 279.4,180.7 280.2,168.7 280.2,168.7"/><polygon points="268.7,165.1 266.9,161.6 280.2,168.7 280.2,168.7"/><polygon points="223.5,279.8 218.0,276.1 233.5,264.3 239.0,268.0"/><polygon points="157.5,187.6 156.1,181.2 172.7,171.0 174.1,177.4"/><polygon points="284.2,185.8 282.0,183.7 280.2,168.7 280.2,168.7"/><polygon points="266.9,161.6 265.7,158.7 280.2,168.7 280.2,168.7"/><polygon points="41.2,430.2 39.8,420.7 59.3,432.5 60.9,443.5"/><polygon points="59.7,344.9 65.5,337.3 89.1,335.3 82.4,344.2"/><polygon points="21.6,396.9 22.8,386.9 41.7,395.5 40.0,408.9"/><polygon points="28.3,366.0 32.1,356.7 54.1,355.3 49.0,367.7"/><polygon points="140.8,199.6 139.3,193.2 156.1,181.2 157.5,187.6"/><polygon points="206.2,291.0 200.7,287.3 218.0,276.1 223.5,279.8"/><polygon points="285.9,187.0 284.2,185.8 280.2,168.7 280.2,168.7"/><polygon points="265.7,158.7 265.3,156.7 280.2,168.7 280.2,168.7"/><polygon points="89.1,335.3 95.6,330.4 118.8,330.3 111.7,335.7"/><polygon points="64.0,451.0 60.9,443.5 80.8,454.2 84.2,462.4"/><polygon points="140.7,332.1 147.4,331.2 168.2,334.6 161.4,335.6"/><polygon points="109.6,475.5 104.3,471.5 124.0,478.7 129.4,482.8"/><polygon points="251.1,152.3 251.6,150.6 265.6,155.7 265.3,156.7"/><polygon points="286.6,201.9 285.0,201.8 285.9,187.0 287.0,187.0"/><polygon points="236.4,151.2 237.0,149.1 251.6,150.6 251.1,152.3"/><polygon points="282.8,216.1 280.6,215.9 285.0,201.8 286.6,201.9"/><polygon points="80.2,279.2 76.1,271.2 93.3,253.4 98.0,262.7"/><polygon points="110.5,321.5 104.5,314.8 126.4,304.2 133.3,312.1"/><polygon points="265.3,156.7 265.6,155.7 280.2,168.7 280.2,168.7"/><polygon points="287.0,187.0 285.9,187.0 280.2,168.7 280.2,168.7"/><polygon points="139.2,317.7 133.3,312.1 154.8,302.0 161.3,308.2"/><polygon points="93.3,253.4 90.2,245.9 107.0,228.7 110.4,237.1"/><polygon points="221.1,152.8 221.8,150.3 237.0,149.1 236.4,151.2"/><polygon points="276.1,229.8 273.5,229.6 280.6,215.9 282.8,216.1"/><polygon points="123.9,213.3 122.5,207.1 139.3,193.2 140.8,199.6"/><polygon points="187.1,301.6 181.8,298.1 200.7,287.3 206.2,291.0"/><polygon points="205.3,156.8 206.1,153.9 221.8,150.3 221.1,152.8"/><polygon points="267.0,243.1 264.1,242.8 273.5,229.6 276.1,229.8"/><polygon points="21.4,405.8 21.6,396.9 40.0,408.9 39.8,420.7"/><polygon points="32.1,356.7 36.3,348.9 59.7,344.9 54.1,355.3"/><polygon points="265.6,155.7 266.6,155.8 280.2,168.7 280.2,168.7"/><polygon points="287.3,186.1 287.0,187.0 280.2,168.7 280.2,168.7"/><polygon points="76.5,318.5 71.4,311.4 91.6,297.6 98.1,306.6"/><polygon points="71.4,311.4 66.6,304.0 85.5,288.2 91.6,297.6"/><polygon points="189.1,162.9 190.1,159.8 206.1,153.9 205.3,156.8"/><polygon points="255.7,255.9 252.5,255.7 264.1,242.8 267.0,243.1"/><polygon points="266.6,155.8 268.3,157.0 280.2,168.7 280.2,168.7"/><polygon points="286.8,184.1 287.3,186.1 280.2,168.7 280.2,168.7"/><polygon points="81.5,324.9 76.5,318.5 98.1,306.6 104.5,314.8"/><polygon points="66.6,304.0 62.4,297.0 80.2,279.2 85.5,288.2"/><polygon points="251.6,150.6 253.3,150.8 266.6,155.8 265.6,155.7"/><polygon points="287.1,200.3 286.6,201.9 287.0,187.0 287.3,186.1"/><polygon points="118.8,330.3 125.1,329.4 147.4,331.2 140.7,332.1"/><polygon points="89.3,466.2 84.2,462.4 104.3,471.5 109.6,475.5"/><polygon points="107.0,228.7 105.7,222.9 122.5,207.1 123.9,213.3"/><polygon points="166.3,311.6 161.3,308.2 181.8,298.1 187.1,301.6"/><polygon points="172.7,171.0 173.7,167.9 190.1,159.8 189.1,162.9"/><polygon points="242.3,268.2 239.0,268.0 252.5,255.7 255.7,255.9"/><polygon points="268.3,157.0 270.5,159.1 280.2,168.7 280.2,168.7"/><polygon points="285.7,181.2 286.8,184.1 280.2,168.7 280.2,168.7"/><polygon points="115.6,326.4 110.5,321.5 133.3,312.1 139.2,317.7"/><polygon points="76.1,271.2 73.5,264.8 90.2,245.9 93.3,253.4"/><polygon points="237.0,149.1 239.2,149.2 253.3,150.8 251.6,150.6"/><polygon points="283.4,213.9 282.8,216.1 286.6,201.9 287.1,200.3"/><polygon points="65.5,337.3 71.0,333.0 95.6,330.4 89.1,335.3"/><polygon points="43.9,436.6 41.2,430.2 60.9,443.5 64.0,451.0"/><polygon points="156.1,181.2 157.1,177.9 173.7,167.9 172.7,171.0"/><polygon points="226.8,280.1 223.5,279.8 239.0,268.0 242.3,268.2"/><polygon points="86.2,330.2 81.5,324.9 104.5,314.8 110.5,321.5"/><polygon points="62.4,297.0 59.2,290.7 76.1,271.2 80.2,279.2"/><polygon points="22.4,412.9 21.4,405.8 39.8,420.7 41.2,430.2"/><polygon points="36.3,348.9 40.7,343.2 65.5,337.3 59.7,344.9"/><polygon points="90.2,245.9 89.0,240.6 105.7,222.9 107.0,228.7"/><polygon points="143.7,320.7 139.2,317.7 161.3,308.2 166.3,311.6"/><polygon points="139.3,193.2 140.3,190.0 157.1,177.9 156.1,181.2"/><polygon points="209.5,291.3 206.2,291.0 223.5,279.8 226.8,280.1"/><polygon points="95.6,330.4 101.3,329.6 125.1,329.4 118.8,330.3"/><polygon points="68.6,454.4 64.0,451.0 84.2,462.4 89.3,466.2"/><polygon points="122.5,207.1 123.5,204.0 140.3,190.0 139.3,193.2"/><polygon points="190.3,301.9 187.1,301.6 206.2,291.0 209.5,291.3"/><polygon points="90.2,334.0 86.2,330.2 110.5,321.5 115.6,326.4"/><polygon points="59.2,290.7 57.1,285.6 73.5,264.8 76.1,271.2"/><polygon points="54.0,330.0 50.7,325.5 71.4,311.4 76.5,318.5"/><polygon points="50.7,325.5 47.7,320.8 66.6,304.0 71.4,311.4"/><polygon points="73.5,264.8 72.5,260.2 89.0,240.6 90.2,245.9"/><polygon points="119.4,329.0 115.6,326.4 139.2,317.7 143.7,320.7"/><polygon points="57.3,334.2 54.0,330.0 76.5,318.5 81.5,324.9"/><polygon points="47.7,320.8 45.0,316.2 62.4,297.0 66.6,304.0"/><polygon points="105.7,222.9 106.6,220.0 123.5,204.0 122.5,207.1"/><polygon points="169.3,311.8 166.3,311.6 187.1,301.6 190.3,301.9"/><polygon points="40.7,343.2 44.8,339.9 71.0,333.0 65.5,337.3"/><polygon points="24.5,417.7 22.4,412.9 41.2,430.2 43.9,436.6"/><polygon points="45.0,316.2 43.0,312.2 59.2,290.7 62.4,297.0"/><polygon points="60.3,337.5 57.3,334.2 81.5,324.9 86.2,330.2"/><polygon points="71.0,333.0 76.0,332.3 101.3,329.6 95.6,330.4"/><polygon points="47.9,439.6 43.9,436.6 64.0,451.0 68.6,454.4"/><polygon points="89.0,240.6 89.8,238.0 106.6,220.0 105.7,222.9"/><polygon points="146.5,320.9 143.7,320.7 166.3,311.6 169.3,311.8"/><polygon points="57.1,285.6 56.3,282.1 72.5,260.2 73.5,264.8"/><polygon points="93.2,336.0 90.2,334.0 115.6,326.4 119.4,329.0"/><polygon points="13.3,373.2 13.3,373.2 25.1,376.3 22.8,386.9"/><polygon points="13.3,373.2 13.3,373.2 28.3,366.0 25.1,376.3"/><polygon points="62.8,340.0 60.3,337.5 86.2,330.2 90.2,334.0"/><polygon points="43.0,312.2 41.6,308.9 57.1,285.6 59.2,290.7"/><polygon points="13.3,373.2 13.3,373.2 22.8,386.9 21.6,396.9"/><polygon points="13.3,373.2 13.3,373.2 32.1,356.7 28.3,366.0"/><polygon points="72.5,260.2 73.2,258.0 89.8,238.0 89.0,240.6"/><polygon points="121.7,329.1 119.4,329.0 143.7,320.7 146.5,320.9"/><polygon points="13.3,373.2 13.3,373.2 21.6,396.9 21.4,405.8"/><polygon points="13.3,373.2 13.3,373.2 36.3,348.9 32.1,356.7"/><polygon points="41.6,308.9 41.1,306.7 56.3,282.1 57.1,285.6"/><polygon points="64.8,341.3 62.8,340.0 90.2,334.0 93.2,336.0"/><polygon points="56.3,282.1 56.9,280.3 73.2,258.0 72.5,260.2"/><polygon points="95.0,336.2 93.2,336.0 119.4,329.0 121.7,329.1"/><polygon points="13.3,373.2 13.3,373.2 21.4,405.8 22.4,412.9"/><polygon points="13.3,373.2 13.3,373.2 40.7,343.2 36.3,348.9"/><polygon points="30.7,339.2 30.7,339.2 50.7,325.5 54.0,330.0"/><polygon points="30.7,339.2 30.7,339.2 47.7,320.8 50.7,325.5"/><polygon points="30.7,339.2 30.7,339.2 54.0,330.0 57.3,334.2"/><polygon points="30.7,339.2 30.7,339.2 45.0,316.2 47.7,320.8"/><polygon points="30.7,339.2 30.7,339.2 43.0,312.2 45.0,316.2"/><polygon points="30.7,339.2 30.7,339.2 57.3,334.2 60.3,337.5"/><polygon points="41.1,306.7 41.5,305.5 56.9,280.3 56.3,282.1"/><polygon points="65.9,341.4 64.8,341.3 93.2,336.0 95.0,336.2"/><polygon points="30.7,339.2 30.7,339.2 60.3,337.5 62.8,340.0"/><polygon points="30.7,339.2 30.7,339.2 41.6,308.9 43.0,312.2"/><polygon points="30.7,339.2 30.7,339.2 41.1,306.7 41.6,308.9"/><polygon points="30.7,339.2 30.7,339.2 62.8,340.0 64.8,341.3"/><polygon points="30.7,339.2 30.7,339.2 41.5,305.5 41.1,306.7"/><polygon points="30.7,339.2 30.7,339.2 64.8,341.3 65.9,341.4"/></g>
<path d="M4 348 L21 348 Q28 353 22 364 Q16 377 18 394 Q19 404 23 412 L4 412 Z" fill="#000"/>
<path d="M21 348 Q28 353 22 364 Q16 377 18 394 Q19 404 23 412" fill="none" stroke="#fff" stroke-width="1"/>
<path d="M26 336 L141 325 L164 332 L104 339 L28 348 Z" fill="#F0FFFF" opacity="0.75"/>
<path d="M24 339 L141 325 M28 336 L141 325 M26 342 L141 326 M34 345 L144 327" stroke="#fff" stroke-width="1.5" fill="none" opacity="0.8"/>
<polyline points="166,330 317,325" stroke="#fff" fill="none"/>
<polyline points="209,346 262,349" stroke="#fff" fill="none"/>
</svg>
<div class="t" style="left:317px;top:313px;font-size:13px;line-height:16px;font-weight:bold;color:#FFFF30;transform:scaleY(1.1)">(0,0)</div>
<div class="t" style="left:264px;top:338px;font-size:13px;line-height:16px;font-weight:bold;color:#fff;transform:scaleY(1.1)">(90,0)</div>
<div class="t" style="left:58px;top:-7px;font-size:13px;line-height:16px;font-weight:bold;color:#FFFF30;transform:scaleY(1.1);letter-spacing:0.3px">(30,30)</div>
</div>

<!-- PV status -->
<div class="stat" style="left:292px;top:634px;width:146px;height:16px">Angles : (-3, 51, 0)</div>
<div class="stat" style="left:440px;top:634px;width:166px;height:16px">Scale : (100%, 100%, 100%)</div>
<div class="stat" style="left:608px;top:634px;width:56px;height:16px">100%</div>
<div class="t" style="left:27px;top:655px;font-size:11px">Ready</div>
<div class="stat" style="left:558px;top:652px;width:26px;height:17px"></div>
<div class="stat" style="left:585px;top:652px;width:29px;height:17px;text-align:center;padding:0">NUM</div>
<div class="stat" style="left:615px;top:652px;width:32px;height:17px"></div>
<svg class="a" width="14" height="14" style="left:651px;top:655px"><path d="M13 1L1 13M13 5L5 13M13 9L9 13" stroke="#fff" stroke-width="1"/><path d="M13 2L2 13M13 6L6 13M13 10L10 13" stroke="#808080" stroke-width="1"/></svg>

</body></html>
